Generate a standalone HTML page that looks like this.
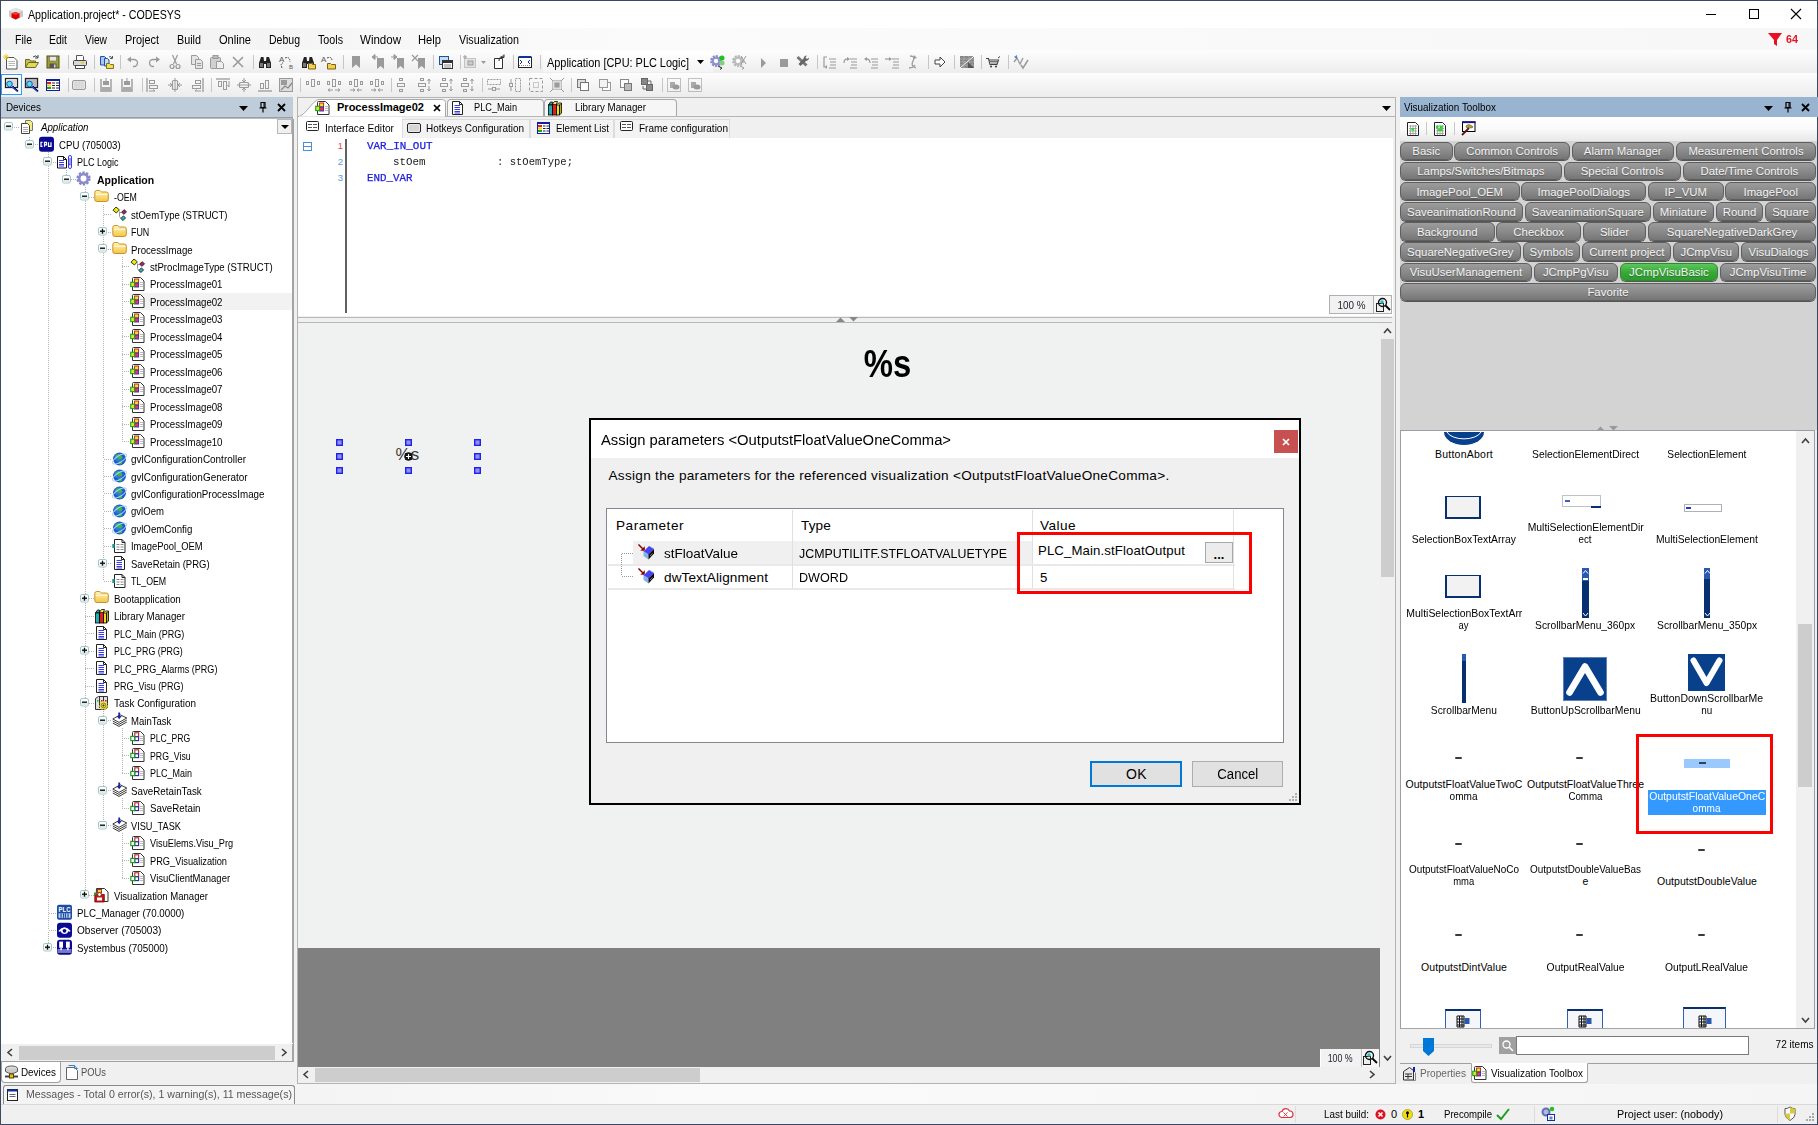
<!DOCTYPE html>
<html><head><meta charset="utf-8"><title>Application.project* - CODESYS</title>
<style>html,body{margin:0;padding:0}body{width:1818px;height:1125px;overflow:hidden;position:relative;background:#f0f0f0;font-family:"Liberation Sans",sans-serif;font-size:11px;color:#000}
body>div,body>span,body>svg{position:absolute;display:block}body>span{white-space:pre}svg{overflow:visible}</style></head>
<body>
<svg width="0" height="0" style="position:absolute"><defs><linearGradient id="fg" x1="0" y1="0" x2="0" y2="1"><stop offset="0" stop-color="#fff6b8"/><stop offset="1" stop-color="#f3c544"/></linearGradient></defs></svg>
<div style="left:0px;top:0px;width:1818px;height:1125px;background:#f0f0f0"></div>
<div style="left:1px;top:1px;width:1816px;height:27px;background:#fff"></div>
<svg style="left:8px;top:7px" width="16" height="14"><path d="M8 1l7 2.500v6l-7 3.500-7-3.500v-6z" fill="#c8c8c8"/><path d="M8 1l7 2.500-7 3-7-3z" fill="#e4e4e4"/><path d="M7.500 5l4 1.500v4l-4 2-4-2v-4z" fill="#e00000"/><path d="M7.500 5l4 1.500-4 1.700-4-1.700z" fill="#ff3030"/></svg>
<span style="left:28.00px;top:6.50px;font-size:12px;line-height:16px;transform:scaleX(0.8891);transform-origin:0 50%;">Application.project* - CODESYS</span>
<div style="left:1706px;top:14px;width:10px;height:1px;background:#000"></div>
<div style="left:1749px;top:9px;width:10px;height:10px;border:1px solid #000;box-sizing:border-box"></div>
<svg style="left:1790px;top:8px" width="12" height="12"><path d="M1 1l10 10M11 1l-10 10" stroke="#000" stroke-width="1.100"/></svg>
<div style="left:1px;top:28px;width:1816px;height:22px;background:linear-gradient(90deg,#f0f0f0,#fbfbfb 35%,#f7f7f7)"></div>
<span style="left:15.00px;top:31.50px;font-size:12px;line-height:16px;transform:scaleX(0.8788);transform-origin:0 50%;">File</span>
<span style="left:49.00px;top:31.50px;font-size:12px;line-height:16px;transform:scaleX(0.8701);transform-origin:0 50%;">Edit</span>
<span style="left:85.00px;top:31.50px;font-size:12px;line-height:16px;transform:scaleX(0.8528);transform-origin:0 50%;">View</span>
<span style="left:125.00px;top:31.50px;font-size:12px;line-height:16px;transform:scaleX(0.9101);transform-origin:0 50%;">Project</span>
<span style="left:177.00px;top:31.50px;font-size:12px;line-height:16px;transform:scaleX(0.8993);transform-origin:0 50%;">Build</span>
<span style="left:219.00px;top:31.50px;font-size:12px;line-height:16px;transform:scaleX(0.9225);transform-origin:0 50%;">Online</span>
<span style="left:269.00px;top:31.50px;font-size:12px;line-height:16px;transform:scaleX(0.8763);transform-origin:0 50%;">Debug</span>
<span style="left:318.00px;top:31.50px;font-size:12px;line-height:16px;transform:scaleX(0.8924);transform-origin:0 50%;">Tools</span>
<span style="left:360.00px;top:31.50px;font-size:12px;line-height:16px;transform:scaleX(0.9605);transform-origin:0 50%;">Window</span>
<span style="left:418.00px;top:31.50px;font-size:12px;line-height:16px;transform:scaleX(0.9316);transform-origin:0 50%;">Help</span>
<span style="left:459.00px;top:31.50px;font-size:12px;line-height:16px;transform:scaleX(0.8934);transform-origin:0 50%;">Visualization</span>
<svg style="left:1768px;top:32px" width="14" height="15"><path d="M0 1h14l-5 7v6l-3-2v-4z" fill="#e81123"/></svg>
<span style="left:1786.00px;top:32.00px;font-size:11px;line-height:15px;transform:scaleX(0.9796);transform-origin:0 50%;font-weight:bold;color:#e81123;">64</span>
<div style="left:1px;top:50px;width:1816px;height:23px;background:linear-gradient(#fdfdfd,#ededed)"></div>
<div style="left:1px;top:73px;width:1816px;height:24px;background:linear-gradient(#fdfdfd,#ececec)"></div>
<div style="left:543px;top:51px;width:170px;height:21px;background:linear-gradient(#fff,#f4f4f4)"></div>
<span style="left:547.00px;top:54.60px;font-size:12px;line-height:16px;transform:scaleX(0.9098);transform-origin:0 50%;">Application [CPU: PLC Logic]</span>
<svg style="left:697px;top:60px" width="7" height="4"><path d="M0 0h7l-3.500 4z" fill="#000"/></svg>
<svg style="left:3px;top:54px" width="16" height="16" viewBox="0 0 16 16"><path d="M3.500 3.500h7.500l3 3v8.500h-10.500z" fill="#fff" stroke="#555"/><path d="M5.500 7.500h6.500M5.500 9.500h6.500M5.500 11.500h6.500" stroke="#b8b8b8"/><path d="M3 0v6M0 3h6M1 1l4 4M5 1l-4 4" stroke="#e8d020" stroke-width=".9"/></svg>
<svg style="left:24px;top:54px" width="16" height="16" viewBox="0 0 16 16"><path d="M1.500 13.500v-8h4l1 1.500h5v2" fill="#c8c050" stroke="#6a6a20"/><path d="M1.500 13.500l3-5h10l-3 5z" fill="#e0d860" stroke="#6a6a20"/><path d="M9 3q3-2.500 5 .5M14 1v3h-3" fill="none" stroke="#444"/></svg>
<svg style="left:45px;top:54px" width="16" height="16" viewBox="0 0 16 16"><rect x="2" y="2" width="12" height="12" fill="#a0a030" stroke="#505010"/><rect x="4.500" y="2.500" width="7" height="4.500" fill="#e8e8e8" stroke="#666" stroke-width=".6"/><rect x="4.500" y="9.500" width="7" height="4.500" fill="#555"/><rect x="9" y="10.500" width="1.500" height="3" fill="#ddd"/></svg>
<div style="left:68px;top:55px;width:1px;height:14px;background:#c6c6c6"></div>
<svg style="left:72px;top:54px" width="16" height="16" viewBox="0 0 16 16"><path d="M4.500 6v-4.500h6l1 1v3.500" fill="#fff" stroke="#555"/><rect x="1.500" y="6.500" width="13" height="5" rx="1" fill="#d8d8d8" stroke="#444"/><path d="M3.500 11.500h9v3h-9z" fill="#fff" stroke="#444"/><rect x="9" y="8" width="3" height="1.500" fill="#e0d020"/></svg>
<div style="left:94px;top:55px;width:1px;height:14px;background:#c6c6c6"></div>
<svg style="left:99px;top:54px" width="16" height="16" viewBox="0 0 16 16"><path d="M1.500 2.500h4l1.500 1.500v7h-5.500z" fill="#a8c8f0" stroke="#2050a0"/><path d="M5.500 4.500h3l1.500 1.500v6h-4.500z" fill="#c8dcf8" stroke="#2050a0"/><path d="M7.500 9.500h3l1 1h3v4h-7z" fill="#f0e050" stroke="#807020"/><path d="M10 3q2-1.500 3 1M13.500 2v2.500h-2.500" fill="none" stroke="#555"/></svg>
<div style="left:120px;top:55px;width:1px;height:14px;background:#c6c6c6"></div>
<svg style="left:125px;top:54px" width="16" height="16" viewBox="0 0 16 16"><path d="M3 5.500h6a3.500 3.500 0 0 1 0 7h-1" fill="none" stroke="#9a9a9a" stroke-width="1.300"/><path d="M2 5.500l4-3v6z" fill="#9a9a9a"/></svg>
<svg style="left:146px;top:54px" width="16" height="16" viewBox="0 0 16 16"><path d="M13 5.500h-6a3.500 3.500 0 0 0 0 7h1" fill="none" stroke="#9a9a9a" stroke-width="1.300"/><path d="M14 5.500l-4-3v6z" fill="#9a9a9a"/></svg>
<svg style="left:167px;top:54px" width="16" height="16" viewBox="0 0 16 16"><path d="M5.500 1l4 9M10.500 1l-4 9" stroke="#9a9a9a" stroke-width="1.200"/><circle cx="5" cy="12.500" r="2" fill="none" stroke="#9a9a9a" stroke-width="1.200"/><circle cx="11" cy="12.500" r="2" fill="none" stroke="#9a9a9a" stroke-width="1.200"/></svg>
<svg style="left:189px;top:54px" width="16" height="16" viewBox="0 0 16 16"><path d="M2.500 1.500h5l2 2v7h-7z" fill="#e4e4e4" stroke="#9a9a9a"/><path d="M6.500 5.500h5l2 2v7h-7z" fill="#e4e4e4" stroke="#9a9a9a"/><path d="M8 9.500h4M8 11.500h4" stroke="#9a9a9a"/></svg>
<svg style="left:209px;top:54px" width="16" height="16" viewBox="0 0 16 16"><rect x="1.500" y="3.500" width="10" height="11" rx="1" fill="#d0d0d0" stroke="#9a9a9a"/><rect x="4" y="1.500" width="5" height="3" fill="#bbb" stroke="#9a9a9a"/><path d="M7.500 7.500h5l2 2v5h-7z" fill="#eee" stroke="#9a9a9a"/></svg>
<svg style="left:230px;top:54px" width="16" height="16" viewBox="0 0 16 16"><path d="M3 3l10 10M13 3l-10 10" stroke="#9a9a9a" stroke-width="1.600"/></svg>
<div style="left:253px;top:55px;width:1px;height:14px;background:#c6c6c6"></div>
<svg style="left:257px;top:54px" width="16" height="16" viewBox="0 0 16 16"><path d="M2 14v-5l2-6h2.500l.5 4h2l.5-4h2.500l2 6v5h-5v-4h-2v4z" fill="#222"/><rect x="3" y="9" width="3" height="4" fill="#777"/><rect x="10" y="9" width="3" height="4" fill="#777"/></svg>
<svg style="left:279px;top:54px" width="16" height="16" viewBox="0 0 16 16"><text x="0" y="8" font-family="Liberation Sans" font-size="8" fill="#555">A</text><text x="10" y="15" font-family="Liberation Sans" font-size="6" fill="#555">B</text><path d="M6 4q5-2 5 4M3 14q-2-5 1-5" fill="none" stroke="#444" stroke-dasharray="1.500 1"/></svg>
<svg style="left:300px;top:54px" width="16" height="16" viewBox="0 0 16 16"><path d="M2 14v-5l2-6h2.500l.5 4h2l.5-4h2.500l2 6v5h-5v-4h-2v4z" fill="#222"/><rect x="3" y="9" width="3" height="4" fill="#777"/><rect x="10" y="9" width="3" height="4" fill="#777"/><path d="M8.500 9.500h3l1 1h3v4.500h-7z" fill="#f0d050" stroke="#806010"/></svg>
<svg style="left:321px;top:54px" width="16" height="16" viewBox="0 0 16 16"><text x="0" y="8" font-family="Liberation Sans" font-size="8" fill="#555">A</text><path d="M6 4q5-2 5 3" fill="none" stroke="#444" stroke-dasharray="1.500 1"/><path d="M6.500 9.500h3l1 1h4v4.500h-8z" fill="#f0d050" stroke="#806010"/></svg>
<div style="left:343px;top:55px;width:1px;height:14px;background:#c6c6c6"></div>
<svg style="left:348px;top:54px" width="16" height="16" viewBox="0 0 16 16"><path d="M4 2h8v12l-4-3.500-4 3.500z" fill="#9a9a9a"/></svg>
<svg style="left:370px;top:54px" width="16" height="16" viewBox="0 0 16 16"><path d="M7 4h7v11l-3.500-3-3.500 3z" fill="#9a9a9a"/><path d="M8 3h-5M2 3l3-2.500v5z" stroke="#9a9a9a" fill="#9a9a9a"/></svg>
<svg style="left:390px;top:54px" width="16" height="16" viewBox="0 0 16 16"><path d="M7 4h7v11l-3.500-3-3.500 3z" fill="#9a9a9a"/><path d="M1 3h5M7 3l-3-2.500v5z" stroke="#9a9a9a" fill="#9a9a9a"/></svg>
<svg style="left:411px;top:54px" width="16" height="16" viewBox="0 0 16 16"><path d="M7 4h7v11l-3.500-3-3.500 3z" fill="#9a9a9a"/><path d="M1 1l6 6M7 1l-6 6" stroke="#9a9a9a" stroke-width="1.300"/></svg>
<div style="left:433px;top:55px;width:1px;height:14px;background:#c6c6c6"></div>
<svg style="left:438px;top:54px" width="16" height="16" viewBox="0 0 16 16"><rect x="1.500" y="2.500" width="9" height="8" fill="#c8dcf8" stroke="#2050a0"/><rect x="4.500" y="6.500" width="10" height="8" fill="#fff" stroke="#333"/><path d="M4.500 8h10" stroke="#333" stroke-width="2"/><path d="M6 11h7M6 13h7" stroke="#888"/></svg>
<div style="left:460px;top:55px;width:1px;height:14px;background:#c6c6c6"></div>
<svg style="left:463px;top:54px" width="16" height="16" viewBox="0 0 16 16"><rect x="1.500" y="4.500" width="11" height="9" fill="#e4e4e4" stroke="#9a9a9a" stroke-dasharray="1 1"/><rect x="5" y="7" width="5" height="4" fill="#ccc" stroke="#9a9a9a"/><path d="M2 1v4M0 3h4" stroke="#9a9a9a"/></svg>
<svg style="left:481px;top:61px" width="5" height="3"><path d="M0 0h5l-2.500 3z" fill="#9a9a9a"/></svg>
<svg style="left:491px;top:54px" width="16" height="16" viewBox="0 0 16 16"><path d="M3.500 4.500h8v10h-8z" fill="#fff" stroke="#333"/><path d="M8 7q0-5 5-5M13 .5v3h-3" fill="none" stroke="#333"/></svg>
<div style="left:513px;top:55px;width:1px;height:14px;background:#c6c6c6"></div>
<svg style="left:517px;top:54px" width="16" height="16" viewBox="0 0 16 16"><rect x="1.500" y="3.500" width="13" height="10" fill="#fff" stroke="#222"/><path d="M1.500 3h13" stroke="#1030a0" stroke-width="2"/><path d="M3 6l2 2-2 2M13 6l-2 2 2 2" fill="none" stroke="#1030a0"/><path d="M2 11.500h12" stroke="#888" stroke-dasharray="1 1"/></svg>
<div style="left:540px;top:55px;width:1px;height:14px;background:#c6c6c6"></div>
<svg style="left:710px;top:54px" width="16" height="16" viewBox="0 0 16 16"><circle cx="6" cy="7" r="4.600" fill="none" stroke="#8a8acc" stroke-width="2.600" stroke-dasharray="1.900 1.100"/><circle cx="6" cy="7" r="3.400" fill="none" stroke="#9090d0" stroke-width="2.400"/><circle cx="6" cy="7" r="1.800" fill="#fff"/><circle cx="12" cy="4" r="2.500" fill="#20c020"/><circle cx="12" cy="9" r="2.500" fill="#80d080"/><path d="M8 12l4 2-2 1.500" fill="none" stroke="#222"/></svg>
<svg style="left:732px;top:54px" width="16" height="16" viewBox="0 0 16 16"><circle cx="6" cy="7" r="4.600" fill="none" stroke="#b4b4b4" stroke-width="2.600" stroke-dasharray="1.900 1.100"/><circle cx="6" cy="7" r="3.400" fill="none" stroke="#bcbcbc" stroke-width="2.400"/><circle cx="6" cy="7" r="1.800" fill="#fff"/><path d="M9 2l5 8M14 2l-5 8" stroke="#9a9a9a"/><path d="M8 12l4 2-2 1.500" fill="none" stroke="#9a9a9a"/></svg>
<svg style="left:755px;top:55px" width="16" height="16" viewBox="0 0 16 16"><path d="M6 3l5 5-5 5z" fill="#9a9a9a"/></svg>
<svg style="left:776px;top:55px" width="16" height="16" viewBox="0 0 16 16"><rect x="4" y="4" width="8" height="8" fill="#9a9a9a"/></svg>
<svg style="left:795px;top:54px" width="16" height="16" viewBox="0 0 16 16"><path d="M1.500 4l2-2 9 8.500-2 2z" fill="#777"/><path d="M12 1.500q-3 0-3.500 3l-5 5.500 2 2 5.500-5q3-.5 3-3.500l-2 1.500-1.500-1.500z" fill="#666"/></svg>
<div style="left:817px;top:55px;width:1px;height:14px;background:#c6c6c6"></div>
<svg style="left:821px;top:54px" width="16" height="16" viewBox="0 0 16 16"><path d="M8 5h7M9 8h6M9 11h6M8 14h7" stroke="#9a9a9a" stroke-width="1.200"/><path d="M6 3h-3v10h3" fill="none" stroke="#9a9a9a" stroke-width="1.200"/><path d="M4 13l2-2v4z" fill="#9a9a9a"/></svg>
<svg style="left:842px;top:54px" width="16" height="16" viewBox="0 0 16 16"><path d="M8 5h7M9 8h6M9 11h6M8 14h7" stroke="#9a9a9a" stroke-width="1.200"/><path d="M2 9q0-5 5-4" fill="none" stroke="#9a9a9a" stroke-width="1.200"/><path d="M5 3l3 2-3 2z" fill="#9a9a9a"/></svg>
<svg style="left:863px;top:54px" width="16" height="16" viewBox="0 0 16 16"><path d="M8 5h7M9 8h6M9 11h6M8 14h7" stroke="#9a9a9a" stroke-width="1.200"/><path d="M7 9q0-5-5-4" fill="none" stroke="#9a9a9a" stroke-width="1.200"/><path d="M4 3l-3 2 3 2z" fill="#9a9a9a"/></svg>
<svg style="left:884px;top:54px" width="16" height="16" viewBox="0 0 16 16"><path d="M8 5h7M9 8h6M9 11h6M8 14h7" stroke="#9a9a9a" stroke-width="1.200"/><path d="M1 5h5" stroke="#9a9a9a" stroke-width="1.200"/><path d="M5 3l3 2-3 2z" fill="#9a9a9a"/></svg>
<svg style="left:905px;top:54px" width="16" height="16" viewBox="0 0 16 16"><path d="M5 2q6 0 3 5t3 7M4 14q4 0 6-3" fill="none" stroke="#9a9a9a" stroke-width="1.300"/><path d="M9 1l3 3-4 1z" fill="#9a9a9a"/></svg>
<div style="left:928px;top:55px;width:1px;height:14px;background:#c6c6c6"></div>
<svg style="left:932px;top:54px" width="16" height="16" viewBox="0 0 16 16"><path d="M3 6h5v-3l5 5-5 5v-3h-5z" fill="#fff" stroke="#444"/></svg>
<div style="left:954px;top:55px;width:1px;height:14px;background:#c6c6c6"></div>
<svg style="left:959px;top:54px" width="16" height="16" viewBox="0 0 16 16"><rect x="1" y="2" width="14" height="12" fill="#888"/><path d="M1 14l14-12" stroke="#fff"/><path d="M1 5h14M1 8h14M1 11h14M5 2v12M10 2v12" stroke="#bbb" stroke-width=".6"/><path d="M9 8l6 6h-6z" fill="#555"/></svg>
<div style="left:981px;top:55px;width:1px;height:14px;background:#c6c6c6"></div>
<svg style="left:985px;top:54px" width="16" height="16" viewBox="0 0 16 16"><path d="M1 4.500h2.500l1.500 6h7l1.500-4.500h-9.500" fill="none" stroke="#444" stroke-width="1.100"/><path d="M5 7.500h8M5.500 9h7" stroke="#666" stroke-width=".9"/><circle cx="6" cy="12.500" r="1.100" fill="#444"/><circle cx="11" cy="12.500" r="1.100" fill="#444"/><path d="M13 4l2-1.500" stroke="#444"/></svg>
<div style="left:1008px;top:55px;width:1px;height:14px;background:#c6c6c6"></div>
<svg style="left:1013px;top:54px" width="16" height="16" viewBox="0 0 16 16"><path d="M1 8l3-4 3 6 3-6" fill="none" stroke="#9a9a9a" stroke-width="1.300"/><path d="M8 11l2 3 5-8" fill="none" stroke="#9a9a9a" stroke-width="1.500"/><path d="M1 3l3-2v4z" fill="#5080d0"/></svg>
<div style="left:1px;top:74px;width:21px;height:21px;border:1px solid #3399ff;background:#fff;box-sizing:border-box"></div>
<svg style="left:4px;top:77px" width="16" height="16" viewBox="0 0 16 16"><rect x="1.500" y="1.500" width="12" height="9" fill="#fff" stroke="#222" stroke-width="1.300"/><path d="M3 4h9M3 6h9M3 8h9" stroke="#999" stroke-width=".7"/><circle cx="5.500" cy="7" r="2.800" fill="#60d8f0" stroke="#1060c0"/><path d="M8 9.500l6 5" stroke="#2040c0" stroke-width="2"/><path d="M9 9l5 5" stroke="#000" stroke-width=".8"/></svg>
<svg style="left:24px;top:77px" width="16" height="16" viewBox="0 0 16 16"><rect x="1.500" y="1.500" width="12" height="9" fill="#ccc" stroke="#222" stroke-width="1.300"/><path d="M3 4h9M3 6h9M3 8h9" stroke="#999" stroke-width=".7"/><circle cx="5.500" cy="7" r="2.800" fill="#60d8f0" stroke="#1060c0"/><path d="M8 9.500l6 5" stroke="#2040c0" stroke-width="2"/><path d="M9 9l5 5" stroke="#000" stroke-width=".8"/></svg>
<svg style="left:45px;top:77px" width="16" height="16" viewBox="0 0 16 16"><rect x="1.500" y="2.500" width="13" height="11" fill="#fff" stroke="#1020a0"/><path d="M1.500 3h13" stroke="#1020a0" stroke-width="2"/><rect x="2" y="5" width="4" height="2" fill="#e02020"/><rect x="2" y="7.500" width="4" height="2" fill="#e0d020"/><rect x="2" y="10" width="4" height="2" fill="#20a020"/><path d="M7 6h3M11 6h3M7 8.500h3M11 8.500h3M7 11h3M11 11h3" stroke="#222"/></svg>
<div style="left:68px;top:78px;width:1px;height:14px;background:#c6c6c6"></div>
<svg style="left:71px;top:77px" width="16" height="16" viewBox="0 0 16 16"><rect x="1.500" y="3.500" width="13" height="9" rx="1.500" fill="#e4e4e4" stroke="#9a9a9a"/><path d="M3 6h10M3 8h10M3 10h10M5 4v8M8 4v8M11 4v8" stroke="#d0d0d0" stroke-width=".7"/></svg>
<div style="left:94px;top:78px;width:1px;height:14px;background:#c6c6c6"></div>
<svg style="left:98px;top:77px" width="16" height="16" viewBox="0 0 16 16"><path d="M3 2v12h10v-12" fill="none" stroke="#9a9a9a" stroke-width="1.400"/><rect x="5" y="4" width="6" height="4" fill="#9a9a9a"/><rect x="4" y="10" width="8" height="4" fill="#aaa"/><path d="M8 1v4" stroke="#9a9a9a"/></svg>
<svg style="left:119px;top:77px" width="16" height="16" viewBox="0 0 16 16"><path d="M3 2v12h10v-12" fill="none" stroke="#9a9a9a" stroke-width="1.400"/><rect x="5" y="4" width="6" height="4" fill="#9a9a9a"/><rect x="4" y="10" width="8" height="4" fill="#aaa"/><path d="M8 1v4" stroke="#9a9a9a"/></svg>
<div style="left:142px;top:78px;width:1px;height:14px;background:#c6c6c6"></div>
<svg style="left:145px;top:77px" width="16" height="16" viewBox="0 0 16 16"><path d="M2 1v14" stroke="#9a9a9a" stroke-width="1.300"/><rect x="4.500" y="3.500" width="5" height="3" fill="none" stroke="#9a9a9a"/><rect x="4.500" y="8.500" width="8" height="3" fill="none" stroke="#9a9a9a"/><path d="M4 14h6l-2-1.500" fill="none" stroke="#9a9a9a"/></svg>
<svg style="left:167px;top:77px" width="16" height="16" viewBox="0 0 16 16"><rect x="5.500" y="3.500" width="5" height="9" rx="1" fill="none" stroke="#9a9a9a" stroke-width="1.200"/><path d="M1 8h4M11 8h4M8 1v14" stroke="#9a9a9a"/><path d="M3 6l2 2-2 2M13 6l-2 2 2 2" fill="none" stroke="#9a9a9a"/></svg>
<svg style="left:189px;top:77px" width="16" height="16" viewBox="0 0 16 16"><path d="M14 1v14" stroke="#9a9a9a" stroke-width="1.300"/><rect x="6.500" y="3.500" width="5" height="3" fill="none" stroke="#9a9a9a"/><rect x="3.500" y="8.500" width="8" height="3" fill="none" stroke="#9a9a9a"/><path d="M12 14h-6l2-1.500" fill="none" stroke="#9a9a9a"/></svg>
<div style="left:211px;top:78px;width:1px;height:14px;background:#c6c6c6"></div>
<svg style="left:215px;top:77px" width="16" height="16" viewBox="0 0 16 16"><path d="M1 2h14" stroke="#9a9a9a" stroke-width="1.300"/><rect x="3.500" y="4.500" width="3" height="5" fill="none" stroke="#9a9a9a"/><rect x="8.500" y="4.500" width="3" height="8" fill="none" stroke="#9a9a9a"/><path d="M14 4v6l-1.500-2" fill="none" stroke="#9a9a9a"/></svg>
<svg style="left:236px;top:77px" width="16" height="16" viewBox="0 0 16 16"><rect x="3.500" y="5.500" width="9" height="5" rx="1" fill="none" stroke="#9a9a9a" stroke-width="1.200"/><path d="M8 1v4M8 11v4M1 8h14" stroke="#9a9a9a"/><path d="M6 3l2 2 2-2M6 13l2-2 2 2" fill="none" stroke="#9a9a9a"/></svg>
<svg style="left:257px;top:77px" width="16" height="16" viewBox="0 0 16 16"><path d="M1 14h14" stroke="#9a9a9a" stroke-width="1.300"/><rect x="3.500" y="6.500" width="3" height="5" fill="none" stroke="#9a9a9a"/><rect x="8.500" y="3.500" width="3" height="8" fill="none" stroke="#9a9a9a"/></svg>
<svg style="left:278px;top:77px" width="16" height="16" viewBox="0 0 16 16"><rect x="1.500" y="1.500" width="13" height="13" fill="#ddd" stroke="#9a9a9a"/><rect x="3" y="3" width="6" height="5" fill="#9a9a9a"/><path d="M3 13l4-4 3 2 4-5" fill="none" stroke="#888" stroke-width="1.300"/></svg>
<div style="left:300px;top:78px;width:1px;height:14px;background:#c6c6c6"></div>
<svg style="left:305px;top:77px" width="16" height="16" viewBox="0 0 16 16"><rect x="1.500" y="4.500" width="2" height="3" fill="none" stroke="#9a9a9a"/><rect x="6.500" y="2.500" width="3" height="7" fill="none" stroke="#9a9a9a"/><rect x="12.500" y="4.500" width="2" height="3" fill="none" stroke="#9a9a9a"/></svg>
<svg style="left:326px;top:77px" width="16" height="16" viewBox="0 0 16 16"><rect x="1.500" y="4.500" width="2" height="3" fill="none" stroke="#9a9a9a"/><rect x="6.500" y="2.500" width="3" height="7" fill="none" stroke="#9a9a9a"/><rect x="12.500" y="4.500" width="2" height="3" fill="none" stroke="#9a9a9a"/><path d="M2 13h5M9 13h5" stroke="#9a9a9a"/><path d="M4 11.500l-2 1.500 2 1.500M12 11.500l2 1.500-2 1.500" fill="none" stroke="#9a9a9a"/></svg>
<svg style="left:348px;top:77px" width="16" height="16" viewBox="0 0 16 16"><rect x="1.500" y="4.500" width="2" height="3" fill="none" stroke="#9a9a9a"/><rect x="6.500" y="2.500" width="3" height="7" fill="none" stroke="#9a9a9a"/><rect x="12.500" y="4.500" width="2" height="3" fill="none" stroke="#9a9a9a"/><path d="M2 13h5M9 13h5" stroke="#9a9a9a"/><path d="M5 11.500l2 1.500-2 1.500M11 11.500l-2 1.500 2 1.500" fill="none" stroke="#9a9a9a"/></svg>
<svg style="left:369px;top:77px" width="16" height="16" viewBox="0 0 16 16"><rect x="1.500" y="4.500" width="2" height="3" fill="none" stroke="#9a9a9a"/><rect x="6.500" y="2.500" width="3" height="7" fill="none" stroke="#9a9a9a"/><rect x="12.500" y="4.500" width="2" height="3" fill="none" stroke="#9a9a9a"/><path d="M2 13h5M9 13h5" stroke="#9a9a9a"/><path d="M5 11.500l2 1.500-2 1.500M11 11.500l-2 1.500 2 1.500" fill="none" stroke="#9a9a9a"/></svg>
<div style="left:391px;top:78px;width:1px;height:14px;background:#c6c6c6"></div>
<svg style="left:395px;top:77px" width="16" height="16" viewBox="0 0 16 16"><rect x="4.500" y="1.500" width="3" height="2" fill="none" stroke="#9a9a9a"/><rect x="2.500" y="6.500" width="7" height="3" fill="none" stroke="#9a9a9a"/><rect x="4.500" y="12.500" width="3" height="2" fill="none" stroke="#9a9a9a"/></svg>
<svg style="left:416px;top:77px" width="16" height="16" viewBox="0 0 16 16"><rect x="4.500" y="1.500" width="3" height="2" fill="none" stroke="#9a9a9a"/><rect x="2.500" y="6.500" width="7" height="3" fill="none" stroke="#9a9a9a"/><rect x="4.500" y="12.500" width="3" height="2" fill="none" stroke="#9a9a9a"/><path d="M13 2v5M13 9v5" stroke="#9a9a9a"/><path d="M11.500 4l1.500-2 1.500 2M11.500 12l1.500 2 1.500-2" fill="none" stroke="#9a9a9a"/></svg>
<svg style="left:438px;top:77px" width="16" height="16" viewBox="0 0 16 16"><rect x="4.500" y="1.500" width="3" height="2" fill="none" stroke="#9a9a9a"/><rect x="2.500" y="6.500" width="7" height="3" fill="none" stroke="#9a9a9a"/><rect x="4.500" y="12.500" width="3" height="2" fill="none" stroke="#9a9a9a"/><path d="M13 2v5M13 9v5" stroke="#9a9a9a"/><path d="M11.500 4l1.500-2 1.500 2M11.500 12l1.500 2 1.500-2" fill="none" stroke="#9a9a9a"/></svg>
<svg style="left:459px;top:77px" width="16" height="16" viewBox="0 0 16 16"><rect x="4.500" y="1.500" width="3" height="2" fill="none" stroke="#9a9a9a"/><rect x="2.500" y="6.500" width="7" height="3" fill="none" stroke="#9a9a9a"/><rect x="4.500" y="12.500" width="3" height="2" fill="none" stroke="#9a9a9a"/><path d="M13 2v5M13 9v5" stroke="#9a9a9a"/><path d="M11.500 4l1.500-2 1.500 2M11.500 12l1.500 2 1.500-2" fill="none" stroke="#9a9a9a"/></svg>
<div style="left:482px;top:78px;width:1px;height:14px;background:#c6c6c6"></div>
<svg style="left:486px;top:77px" width="16" height="16" viewBox="0 0 16 16"><rect x="1.500" y="2.500" width="13" height="5" fill="none" stroke="#9a9a9a" stroke-dasharray="2 1"/><path d="M2 12h4M10 12h4" stroke="#9a9a9a"/><rect x="6.500" y="10.500" width="3" height="3" fill="none" stroke="#9a9a9a"/></svg>
<svg style="left:507px;top:77px" width="16" height="16" viewBox="0 0 16 16"><rect x="8.500" y="1.500" width="5" height="13" fill="none" stroke="#9a9a9a" stroke-dasharray="2 1"/><path d="M4 2v4M4 10v4" stroke="#9a9a9a"/><rect x="2.500" y="6.500" width="3" height="3" fill="none" stroke="#9a9a9a"/></svg>
<svg style="left:528px;top:77px" width="16" height="16" viewBox="0 0 16 16"><rect x="1.500" y="1.500" width="13" height="13" fill="none" stroke="#9a9a9a" stroke-dasharray="3 2"/><rect x="5.500" y="5.500" width="5" height="5" fill="none" stroke="#9a9a9a" stroke-dasharray="1 1"/></svg>
<svg style="left:549px;top:77px" width="16" height="16" viewBox="0 0 16 16"><rect x="3.500" y="3.500" width="9" height="9" fill="#ddd" stroke="#9a9a9a" stroke-dasharray="1 1"/><rect x="5.500" y="5.500" width="5" height="5" fill="#9a9a9a"/><path d="M1 1l3 3M15 1l-3 3M1 15l3-3M15 15l-3-3" stroke="#9a9a9a"/></svg>
<div style="left:571px;top:78px;width:1px;height:14px;background:#c6c6c6"></div>
<svg style="left:575px;top:77px" width="16" height="16" viewBox="0 0 16 16"><rect x="2.500" y="2.500" width="8" height="8" fill="#ddd" stroke="#777"/><rect x="5.500" y="5.500" width="8" height="8" fill="#fff" stroke="#777"/></svg>
<svg style="left:597px;top:77px" width="16" height="16" viewBox="0 0 16 16"><rect x="5.500" y="5.500" width="8" height="8" fill="#fff" stroke="#999"/><rect x="2.500" y="2.500" width="8" height="8" fill="#f4f4f4" stroke="#999"/></svg>
<svg style="left:618px;top:77px" width="16" height="16" viewBox="0 0 16 16"><rect x="2.500" y="2.500" width="8" height="8" fill="#fff" stroke="#888"/><rect x="6.500" y="6.500" width="7" height="7" fill="#bbb" stroke="#777"/></svg>
<svg style="left:639px;top:77px" width="16" height="16" viewBox="0 0 16 16"><rect x="2.500" y="1.500" width="6" height="6" fill="#888" stroke="#666"/><rect x="7.500" y="7.500" width="6" height="6" fill="#888" stroke="#666"/><path d="M9 4h3v3M7 12h-3v-3" fill="none" stroke="#666"/></svg>
<div style="left:662px;top:78px;width:1px;height:14px;background:#c6c6c6"></div>
<svg style="left:666px;top:77px" width="16" height="16" viewBox="0 0 16 16"><rect x="1.500" y="1.500" width="13" height="13" fill="none" stroke="#888" stroke-dasharray="1 1"/><rect x="4" y="5" width="5" height="6" fill="#aaa"/><ellipse cx="10" cy="10" rx="3.500" ry="2.500" fill="#999"/></svg>
<svg style="left:687px;top:77px" width="16" height="16" viewBox="0 0 16 16"><rect x="1.500" y="1.500" width="13" height="13" fill="none" stroke="#888" stroke-dasharray="1 1"/><rect x="4" y="5" width="5" height="6" fill="#aaa"/><ellipse cx="10" cy="10" rx="3.500" ry="2.500" fill="#999"/></svg>
<div style="left:1px;top:1084px;width:1816px;height:20px;background:linear-gradient(90deg,#f0f0f0,#fafafa 40%,#f5f5f5)"></div>
<div style="left:1px;top:1104px;width:1816px;height:1px;background:#d8d8d8"></div>
<div style="left:1273px;top:1106px;width:1px;height:17px;background:#dcdcdc"></div>
<div style="left:1px;top:1105px;width:1816px;height:19px;background:#f0f0f0"></div>
<svg style="left:1278px;top:1107px" width="16" height="12"><path d="M4 10.500a3 3 0 0 1 0-6 4 4 0 0 1 7.500-.5 3 3 0 0 1 .5 6.500z" fill="#fff" stroke="#e03040" stroke-width="1.200"/><path d="M5.500 5.500l4 4M9.500 5.500l-4 4" stroke="#e03040" stroke-width=".9"/></svg>
<div style="left:1295px;top:1106px;width:1px;height:17px;background:#dcdcdc"></div>
<span style="left:1324.00px;top:1106.50px;font-size:11px;line-height:15px;transform:scaleX(0.8972);transform-origin:0 50%;">Last build:</span>
<svg style="left:1375px;top:1109px" width="11" height="11"><circle cx="5.500" cy="5.500" r="5" fill="#e01020"/><path d="M3.500 3.500l4 4M7.500 3.500l-4 4" stroke="#fff" stroke-width="1.600"/></svg>
<span style="left:1391.00px;top:1106.50px;font-size:11px;line-height:15px;">0</span>
<svg style="left:1402px;top:1109px" width="11" height="11"><circle cx="5.500" cy="5.500" r="5" fill="#f0e010" stroke="#a09000" stroke-width=".7"/><circle cx="5.500" cy="3.800" r="1.500" fill="#000"/><path d="M5.500 4v4.500" stroke="#000" stroke-width="1.200"/></svg>
<span style="left:1418.00px;top:1106.50px;font-size:11px;line-height:15px;font-weight:bold;">1</span>
<span style="left:1444.00px;top:1106.50px;font-size:11px;line-height:15px;transform:scaleX(0.8722);transform-origin:0 50%;">Precompile</span>
<svg style="left:1496px;top:1108px" width="14" height="12"><path d="M1 7l4 4 8-10" fill="none" stroke="#18a018" stroke-width="2"/></svg>
<div style="left:1534px;top:1106px;width:1px;height:17px;background:#dcdcdc"></div>
<svg style="left:1540px;top:1106px" width="16" height="16"><circle cx="6" cy="6" r="3.500" fill="#b0b8e0" stroke="#6070b0" stroke-width="2"/><circle cx="12" cy="3" r="2.200" fill="#20c020"/><rect x="7.500" y="8.500" width="7" height="6" fill="#fff" stroke="#1030a0"/><rect x="9.500" y="10.500" width="3" height="3" fill="#6080d0"/></svg>
<span style="left:1617.00px;top:1106.50px;font-size:11px;line-height:15px;transform:scaleX(0.9795);transform-origin:0 50%;">Project user: (nobody)</span>
<div style="left:1777px;top:1106px;width:1px;height:17px;background:#dcdcdc"></div>
<svg style="left:1784px;top:1106px" width="12" height="15"><path d="M6 1q3 2 5 1.500v6q0 3-5 6-5-3-5-6v-6q2 .5 5-1.500z" fill="#fff" stroke="#555"/><path d="M6 1q3 2 5 1.500v5h-5z" fill="#d8c840"/><path d="M6 7.500h-5q0 4 5 7z" fill="#d8c840"/></svg>
<svg style="left:1805px;top:1112px" width="10" height="10"><path d="M8 1v2M5 4v2M8 4v2M2 7v2M5 7v2M8 7v2" stroke="#aaa" stroke-width="2"/></svg>
<div style="left:0px;top:0px;width:1818px;height:1px;background:#3d4963"></div>
<div style="left:0px;top:0px;width:1px;height:1125px;background:#3d4963"></div>
<div style="left:1817px;top:0px;width:1px;height:1125px;background:#3d4963"></div>
<div style="left:0px;top:1124px;width:1818px;height:1px;background:#3d4963"></div>
<div style="left:1px;top:97px;width:292px;height:20px;background:#bfcddb"></div>
<span style="left:6.00px;top:100.30px;font-size:11px;line-height:15px;transform:scaleX(0.8946);transform-origin:0 50%;">Devices</span>
<svg style="left:239px;top:106px" width="9" height="5"><path d="M0 0h9l-4.500 5z" fill="#000"/></svg>
<svg style="left:259px;top:102px" width="8" height="11"><path d="M2 .5h4v5h-4zM.5 6h7M4 6v4.500" fill="none" stroke="#000" stroke-width="1.200"/><path d="M5 1v4.500" stroke="#000"/></svg>
<svg style="left:277px;top:103px" width="9" height="9"><path d="M1 1l7 7M8 1l-7 7" stroke="#000" stroke-width="1.800"/></svg>
<div style="left:1px;top:117px;width:292px;height:2px;background:linear-gradient(#8a8f96,#c8ccd0)"></div>
<div style="left:1px;top:119px;width:291px;height:924px;background:#fff"></div>
<div style="left:292px;top:119px;width:2px;height:942px;background:#a4a4a4"></div>
<div style="left:277px;top:119px;width:15px;height:15px;background:#f0f0f0;border:1px solid #b8b8b8;box-sizing:border-box"></div>
<svg style="left:281px;top:125px" width="8" height="4"><path d="M0 0h8l-4 4z" fill="#000"/></svg>
<div style="left:29px;top:135.8px;width:1px;height:5.4599999999999795px;background:repeating-linear-gradient(#fff 0 1px,#b4b4b4 1px 2px)"></div>
<div style="left:48px;top:151.26px;width:1px;height:797.16px;background:repeating-linear-gradient(#fff 0 1px,#b4b4b4 1px 2px)"></div>
<div style="left:66px;top:168.72px;width:1px;height:11.460000000000008px;background:repeating-linear-gradient(#fff 0 1px,#b4b4b4 1px 2px)"></div>
<div style="left:85px;top:186.18px;width:1px;height:709.8599999999999px;background:repeating-linear-gradient(#fff 0 1px,#b4b4b4 1px 2px)"></div>
<div style="left:103px;top:203.64px;width:1px;height:378.12px;background:repeating-linear-gradient(#fff 0 1px,#b4b4b4 1px 2px)"></div>
<div style="left:122px;top:256.02px;width:1px;height:186.06000000000006px;background:repeating-linear-gradient(#fff 0 1px,#b4b4b4 1px 2px)"></div>
<div style="left:103px;top:709.98px;width:1px;height:116.22000000000003px;background:repeating-linear-gradient(#fff 0 1px,#b4b4b4 1px 2px)"></div>
<div style="left:122px;top:727.4399999999999px;width:1px;height:46.379999999999995px;background:repeating-linear-gradient(#fff 0 1px,#b4b4b4 1px 2px)"></div>
<div style="left:122px;top:797.28px;width:1px;height:11.460000000000036px;background:repeating-linear-gradient(#fff 0 1px,#b4b4b4 1px 2px)"></div>
<div style="left:122px;top:832.2px;width:1px;height:46.379999999999995px;background:repeating-linear-gradient(#fff 0 1px,#b4b4b4 1px 2px)"></div>
<div style="left:11px;top:127px;width:9px;height:1px;background:repeating-linear-gradient(90deg,#fff 0 1px,#b4b4b4 1px 2px)"></div>
<svg style="left:3.5px;top:122.1px" width="9" height="9" viewBox="0 0 9 9"><rect x=".5" y=".5" width="8" height="7.500" rx="1.500" fill="#fff" stroke="#9ccacc"/><rect x="1.300" y="4.500" width="6.400" height="2.800" fill="#e6e6e6"/><path d="M2 4.200H7" stroke="#111" stroke-width="1.400"/></svg>
<svg style="left:20px;top:119px" width="16" height="16" viewBox="0 0 16 16"><path d="M5.500 1.500h5l2 2v8h-7z" fill="#f4ee80" stroke="#777"/><path d="M1.500 4.500h6l2 2v8h-8z" fill="#fff" stroke="#444"/><path d="M3 8.500h5M3 10.500h5M3 12.500h5" stroke="#aaa"/></svg>
<span style="left:40.70px;top:120.30px;font-size:11px;line-height:15px;transform:scaleX(0.8824);transform-origin:0 50%;font-style:italic;">Application</span>
<div style="left:30px;top:144px;width:8px;height:1px;background:repeating-linear-gradient(90deg,#fff 0 1px,#b4b4b4 1px 2px)"></div>
<svg style="left:24.5px;top:139.6px" width="9" height="9" viewBox="0 0 9 9"><rect x=".5" y=".5" width="8" height="7.500" rx="1.500" fill="#fff" stroke="#9ccacc"/><rect x="1.300" y="4.500" width="6.400" height="2.800" fill="#e6e6e6"/><path d="M2 4.200H7" stroke="#111" stroke-width="1.400"/></svg>
<svg style="left:38.5px;top:136px" width="16" height="16" viewBox="0 0 16 16"><g transform="translate(0,.8)"><rect x="0" y="0" width="15" height="15" rx="3" fill="#0a0a92"/><path d="M3.500 5.500h-1.500v4h1.500M5.500 10v-4.500h2v2.500h-2M9.500 5.500v4h2.500v-4" fill="none" stroke="#fff" stroke-width="1.200"/></g></svg>
<span style="left:58.70px;top:137.76px;font-size:11px;line-height:15px;transform:scaleX(0.8759);transform-origin:0 50%;">CPU (705003)</span>
<div style="left:48px;top:162px;width:8px;height:1px;background:repeating-linear-gradient(90deg,#fff 0 1px,#b4b4b4 1px 2px)"></div>
<svg style="left:42.5px;top:157.0px" width="9" height="9" viewBox="0 0 9 9"><rect x=".5" y=".5" width="8" height="7.500" rx="1.500" fill="#fff" stroke="#9ccacc"/><rect x="1.300" y="4.500" width="6.400" height="2.800" fill="#e6e6e6"/><path d="M2 4.200H7" stroke="#111" stroke-width="1.400"/></svg>
<svg style="left:56.5px;top:154px" width="16" height="16" viewBox="0 0 16 16"><path d="M.5 2.500h6l3 3v8.500h-9z" fill="#fff" stroke="#111"/><path d="M6.500 2.500v3h3" fill="none" stroke="#111"/><path d="M2 6.500h5M2 8.500h5M2 10.500h5M2 12h5" stroke="#3a3af0"/><rect x="11.500" y="1.500" width="3" height="13" rx="1.500" fill="#fff" stroke="#3a3af0"/><path d="M13 4v7M11.800 9.500l1.200 2" stroke="#3a3af0"/></svg>
<span style="left:76.70px;top:155.22px;font-size:11px;line-height:15px;transform:scaleX(0.8195);transform-origin:0 50%;">PLC Logic</span>
<div style="left:66px;top:179px;width:10px;height:1px;background:repeating-linear-gradient(90deg,#fff 0 1px,#b4b4b4 1px 2px)"></div>
<svg style="left:61.5px;top:174.5px" width="9" height="9" viewBox="0 0 9 9"><rect x=".5" y=".5" width="8" height="7.500" rx="1.500" fill="#fff" stroke="#9ccacc"/><rect x="1.300" y="4.500" width="6.400" height="2.800" fill="#e6e6e6"/><path d="M2 4.200H7" stroke="#111" stroke-width="1.400"/></svg>
<svg style="left:75.5px;top:171px" width="16" height="16" viewBox="0 0 16 16"><circle cx="7.500" cy="7.500" r="5.600" fill="none" stroke="#8585c8" stroke-width="3" stroke-dasharray="2.200 1.320"/><circle cx="7.500" cy="7.500" r="4.300" fill="none" stroke="#8c8ccc" stroke-width="2.800"/><circle cx="7.500" cy="7.500" r="2.700" fill="#fff"/></svg>
<span style="left:96.70px;top:172.68px;font-size:11px;line-height:15px;transform:scaleX(0.9551);transform-origin:0 50%;font-weight:bold;">Application</span>
<div style="left:84px;top:197px;width:10px;height:1px;background:repeating-linear-gradient(90deg,#fff 0 1px,#b4b4b4 1px 2px)"></div>
<svg style="left:79.5px;top:191.9px" width="9" height="9" viewBox="0 0 9 9"><rect x=".5" y=".5" width="8" height="7.500" rx="1.500" fill="#fff" stroke="#9ccacc"/><rect x="1.300" y="4.500" width="6.400" height="2.800" fill="#e6e6e6"/><path d="M2 4.200H7" stroke="#111" stroke-width="1.400"/></svg>
<svg style="left:93.5px;top:189px" width="16" height="16" viewBox="0 0 16 16"><path d="M.8 3.500q0-2 2-2h2.500q1 0 1.500 1l.5 .5h5q2 0 2 2v5.500q0 2-2 2h-9.500q-2 0-2-2z" fill="url(#fg)" stroke="#c98f30"/><path d="M1.800 5.500h11.500" stroke="#fffbe0" stroke-opacity=".8"/></svg>
<span style="left:113.70px;top:190.14px;font-size:11px;line-height:15px;transform:scaleX(0.7970);transform-origin:0 50%;">-OEM</span>
<div style="left:103px;top:214px;width:9px;height:1px;background:repeating-linear-gradient(90deg,#fff 0 1px,#b4b4b4 1px 2px)"></div>
<svg style="left:112px;top:206px" width="16" height="16" viewBox="0 0 16 16"><path d="M7.500 5.500v5q0 1 1.500 1.500M7.500 6.500h2" fill="none" stroke="#999"/><path d="M1 4.200l3-3.200 3.400 2.800-3 3.200z" fill="#ecec00" stroke="#222" stroke-width=".9"/><path d="M9.600 6.300l2.400-2.600 2.500 2-2.400 2.600z" fill="#c4107c" stroke="#222" stroke-width=".9"/><path d="M8.800 12.600l2.500-2.700 2.300 1.900-2.500 2.700z" fill="#20b8b8" stroke="#222" stroke-width=".9"/></svg>
<span style="left:131.40px;top:207.60px;font-size:11px;line-height:15px;transform:scaleX(0.8675);transform-origin:0 50%;">stOemType (STRUCT)</span>
<div style="left:103px;top:232px;width:9px;height:1px;background:repeating-linear-gradient(90deg,#fff 0 1px,#b4b4b4 1px 2px)"></div>
<svg style="left:98px;top:226.9px" width="9" height="9" viewBox="0 0 9 9"><rect x=".5" y=".5" width="8" height="7.500" rx="1.500" fill="#fff" stroke="#9ccacc"/><rect x="1.300" y="4.500" width="6.400" height="2.800" fill="#e6e6e6"/><path d="M2 4.200H7" stroke="#111" stroke-width="1.400"/><path d="M4.500 1.700V6.700" stroke="#111" stroke-width="1.300"/></svg>
<svg style="left:112px;top:224px" width="16" height="16" viewBox="0 0 16 16"><path d="M.8 3.500q0-2 2-2h2.500q1 0 1.500 1l.5 .5h5q2 0 2 2v5.500q0 2-2 2h-9.500q-2 0-2-2z" fill="url(#fg)" stroke="#c98f30"/><path d="M1.800 5.500h11.500" stroke="#fffbe0" stroke-opacity=".8"/></svg>
<span style="left:131.40px;top:225.06px;font-size:11px;line-height:15px;transform:scaleX(0.8094);transform-origin:0 50%;">FUN</span>
<div style="left:103px;top:249px;width:9px;height:1px;background:repeating-linear-gradient(90deg,#fff 0 1px,#b4b4b4 1px 2px)"></div>
<svg style="left:98px;top:244.3px" width="9" height="9" viewBox="0 0 9 9"><rect x=".5" y=".5" width="8" height="7.500" rx="1.500" fill="#fff" stroke="#9ccacc"/><rect x="1.300" y="4.500" width="6.400" height="2.800" fill="#e6e6e6"/><path d="M2 4.200H7" stroke="#111" stroke-width="1.400"/></svg>
<svg style="left:112px;top:241px" width="16" height="16" viewBox="0 0 16 16"><path d="M.8 3.500q0-2 2-2h2.500q1 0 1.500 1l.5 .5h5q2 0 2 2v5.500q0 2-2 2h-9.500q-2 0-2-2z" fill="url(#fg)" stroke="#c98f30"/><path d="M1.800 5.500h11.500" stroke="#fffbe0" stroke-opacity=".8"/></svg>
<span style="left:131.40px;top:242.52px;font-size:11px;line-height:15px;transform:scaleX(0.8761);transform-origin:0 50%;">ProcessImage</span>
<div style="left:121px;top:266px;width:9px;height:1px;background:repeating-linear-gradient(90deg,#fff 0 1px,#b4b4b4 1px 2px)"></div>
<svg style="left:130px;top:258px" width="16" height="16" viewBox="0 0 16 16"><path d="M7.500 5.500v5q0 1 1.500 1.500M7.500 6.500h2" fill="none" stroke="#999"/><path d="M1 4.200l3-3.200 3.400 2.800-3 3.200z" fill="#ecec00" stroke="#222" stroke-width=".9"/><path d="M9.600 6.300l2.400-2.600 2.500 2-2.400 2.600z" fill="#c4107c" stroke="#222" stroke-width=".9"/><path d="M8.800 12.600l2.500-2.700 2.300 1.900-2.500 2.700z" fill="#20b8b8" stroke="#222" stroke-width=".9"/></svg>
<span style="left:150.10px;top:259.98px;font-size:11px;line-height:15px;transform:scaleX(0.8727);transform-origin:0 50%;">stProcImageType (STRUCT)</span>
<div style="left:121px;top:284px;width:9px;height:1px;background:repeating-linear-gradient(90deg,#fff 0 1px,#b4b4b4 1px 2px)"></div>
<svg style="left:130px;top:276px" width="16" height="16" viewBox="0 0 16 16"><path d="M3.500 1.500h7l3.500 3.500v9.500h-11.500v-12q0-1 1-1z" fill="#fff" stroke="#333"/><path d="M10 6.500h3M10 8.500h3M10 10.500h3" stroke="#bbb"/><rect x="4.600" y="3" width="4" height="4" fill="#f0e020" stroke="#b02020" stroke-width=".9"/><rect x="4.600" y="7" width="4" height="4" fill="#e8306a" stroke="#3030a0" stroke-width=".9"/><rect x=".7" y="6.200" width="3.800" height="4.400" fill="#d8e820" stroke="#20a020" stroke-width="1.100"/></svg>
<span style="left:150.10px;top:277.44px;font-size:11px;line-height:15px;transform:scaleX(0.8783);transform-origin:0 50%;">ProcessImage01</span>
<div style="left:130px;top:293.40000000000003px;width:162px;height:17px;background:#f2f2f2"></div>
<div style="left:121px;top:301px;width:9px;height:1px;background:repeating-linear-gradient(90deg,#fff 0 1px,#b4b4b4 1px 2px)"></div>
<svg style="left:130px;top:293px" width="16" height="16" viewBox="0 0 16 16"><path d="M3.500 1.500h7l3.500 3.500v9.500h-11.500v-12q0-1 1-1z" fill="#fff" stroke="#333"/><path d="M10 6.500h3M10 8.500h3M10 10.500h3" stroke="#bbb"/><rect x="4.600" y="3" width="4" height="4" fill="#f0e020" stroke="#b02020" stroke-width=".9"/><rect x="4.600" y="7" width="4" height="4" fill="#e8306a" stroke="#3030a0" stroke-width=".9"/><rect x=".7" y="6.200" width="3.800" height="4.400" fill="#d8e820" stroke="#20a020" stroke-width="1.100"/></svg>
<span style="left:150.10px;top:294.90px;font-size:11px;line-height:15px;transform:scaleX(0.8783);transform-origin:0 50%;">ProcessImage02</span>
<div style="left:121px;top:319px;width:9px;height:1px;background:repeating-linear-gradient(90deg,#fff 0 1px,#b4b4b4 1px 2px)"></div>
<svg style="left:130px;top:311px" width="16" height="16" viewBox="0 0 16 16"><path d="M3.500 1.500h7l3.500 3.500v9.500h-11.500v-12q0-1 1-1z" fill="#fff" stroke="#333"/><path d="M10 6.500h3M10 8.500h3M10 10.500h3" stroke="#bbb"/><rect x="4.600" y="3" width="4" height="4" fill="#f0e020" stroke="#b02020" stroke-width=".9"/><rect x="4.600" y="7" width="4" height="4" fill="#e8306a" stroke="#3030a0" stroke-width=".9"/><rect x=".7" y="6.200" width="3.800" height="4.400" fill="#d8e820" stroke="#20a020" stroke-width="1.100"/></svg>
<span style="left:150.10px;top:312.36px;font-size:11px;line-height:15px;transform:scaleX(0.8783);transform-origin:0 50%;">ProcessImage03</span>
<div style="left:121px;top:336px;width:9px;height:1px;background:repeating-linear-gradient(90deg,#fff 0 1px,#b4b4b4 1px 2px)"></div>
<svg style="left:130px;top:328px" width="16" height="16" viewBox="0 0 16 16"><path d="M3.500 1.500h7l3.500 3.500v9.500h-11.500v-12q0-1 1-1z" fill="#fff" stroke="#333"/><path d="M10 6.500h3M10 8.500h3M10 10.500h3" stroke="#bbb"/><rect x="4.600" y="3" width="4" height="4" fill="#f0e020" stroke="#b02020" stroke-width=".9"/><rect x="4.600" y="7" width="4" height="4" fill="#e8306a" stroke="#3030a0" stroke-width=".9"/><rect x=".7" y="6.200" width="3.800" height="4.400" fill="#d8e820" stroke="#20a020" stroke-width="1.100"/></svg>
<span style="left:150.10px;top:329.82px;font-size:11px;line-height:15px;transform:scaleX(0.8783);transform-origin:0 50%;">ProcessImage04</span>
<div style="left:121px;top:354px;width:9px;height:1px;background:repeating-linear-gradient(90deg,#fff 0 1px,#b4b4b4 1px 2px)"></div>
<svg style="left:130px;top:346px" width="16" height="16" viewBox="0 0 16 16"><path d="M3.500 1.500h7l3.500 3.500v9.500h-11.500v-12q0-1 1-1z" fill="#fff" stroke="#333"/><path d="M10 6.500h3M10 8.500h3M10 10.500h3" stroke="#bbb"/><rect x="4.600" y="3" width="4" height="4" fill="#f0e020" stroke="#b02020" stroke-width=".9"/><rect x="4.600" y="7" width="4" height="4" fill="#e8306a" stroke="#3030a0" stroke-width=".9"/><rect x=".7" y="6.200" width="3.800" height="4.400" fill="#d8e820" stroke="#20a020" stroke-width="1.100"/></svg>
<span style="left:150.10px;top:347.28px;font-size:11px;line-height:15px;transform:scaleX(0.8783);transform-origin:0 50%;">ProcessImage05</span>
<div style="left:121px;top:371px;width:9px;height:1px;background:repeating-linear-gradient(90deg,#fff 0 1px,#b4b4b4 1px 2px)"></div>
<svg style="left:130px;top:363px" width="16" height="16" viewBox="0 0 16 16"><path d="M3.500 1.500h7l3.500 3.500v9.500h-11.500v-12q0-1 1-1z" fill="#fff" stroke="#333"/><path d="M10 6.500h3M10 8.500h3M10 10.500h3" stroke="#bbb"/><rect x="4.600" y="3" width="4" height="4" fill="#f0e020" stroke="#b02020" stroke-width=".9"/><rect x="4.600" y="7" width="4" height="4" fill="#e8306a" stroke="#3030a0" stroke-width=".9"/><rect x=".7" y="6.200" width="3.800" height="4.400" fill="#d8e820" stroke="#20a020" stroke-width="1.100"/></svg>
<span style="left:150.10px;top:364.74px;font-size:11px;line-height:15px;transform:scaleX(0.8783);transform-origin:0 50%;">ProcessImage06</span>
<div style="left:121px;top:389px;width:9px;height:1px;background:repeating-linear-gradient(90deg,#fff 0 1px,#b4b4b4 1px 2px)"></div>
<svg style="left:130px;top:381px" width="16" height="16" viewBox="0 0 16 16"><path d="M3.500 1.500h7l3.500 3.500v9.500h-11.500v-12q0-1 1-1z" fill="#fff" stroke="#333"/><path d="M10 6.500h3M10 8.500h3M10 10.500h3" stroke="#bbb"/><rect x="4.600" y="3" width="4" height="4" fill="#f0e020" stroke="#b02020" stroke-width=".9"/><rect x="4.600" y="7" width="4" height="4" fill="#e8306a" stroke="#3030a0" stroke-width=".9"/><rect x=".7" y="6.200" width="3.800" height="4.400" fill="#d8e820" stroke="#20a020" stroke-width="1.100"/></svg>
<span style="left:150.10px;top:382.20px;font-size:11px;line-height:15px;transform:scaleX(0.8783);transform-origin:0 50%;">ProcessImage07</span>
<div style="left:121px;top:406px;width:9px;height:1px;background:repeating-linear-gradient(90deg,#fff 0 1px,#b4b4b4 1px 2px)"></div>
<svg style="left:130px;top:398px" width="16" height="16" viewBox="0 0 16 16"><path d="M3.500 1.500h7l3.500 3.500v9.500h-11.500v-12q0-1 1-1z" fill="#fff" stroke="#333"/><path d="M10 6.500h3M10 8.500h3M10 10.500h3" stroke="#bbb"/><rect x="4.600" y="3" width="4" height="4" fill="#f0e020" stroke="#b02020" stroke-width=".9"/><rect x="4.600" y="7" width="4" height="4" fill="#e8306a" stroke="#3030a0" stroke-width=".9"/><rect x=".7" y="6.200" width="3.800" height="4.400" fill="#d8e820" stroke="#20a020" stroke-width="1.100"/></svg>
<span style="left:150.10px;top:399.66px;font-size:11px;line-height:15px;transform:scaleX(0.8783);transform-origin:0 50%;">ProcessImage08</span>
<div style="left:121px;top:424px;width:9px;height:1px;background:repeating-linear-gradient(90deg,#fff 0 1px,#b4b4b4 1px 2px)"></div>
<svg style="left:130px;top:416px" width="16" height="16" viewBox="0 0 16 16"><path d="M3.500 1.500h7l3.500 3.500v9.500h-11.500v-12q0-1 1-1z" fill="#fff" stroke="#333"/><path d="M10 6.500h3M10 8.500h3M10 10.500h3" stroke="#bbb"/><rect x="4.600" y="3" width="4" height="4" fill="#f0e020" stroke="#b02020" stroke-width=".9"/><rect x="4.600" y="7" width="4" height="4" fill="#e8306a" stroke="#3030a0" stroke-width=".9"/><rect x=".7" y="6.200" width="3.800" height="4.400" fill="#d8e820" stroke="#20a020" stroke-width="1.100"/></svg>
<span style="left:150.10px;top:417.12px;font-size:11px;line-height:15px;transform:scaleX(0.8783);transform-origin:0 50%;">ProcessImage09</span>
<div style="left:121px;top:441px;width:9px;height:1px;background:repeating-linear-gradient(90deg,#fff 0 1px,#b4b4b4 1px 2px)"></div>
<svg style="left:130px;top:433px" width="16" height="16" viewBox="0 0 16 16"><path d="M3.500 1.500h7l3.500 3.500v9.500h-11.500v-12q0-1 1-1z" fill="#fff" stroke="#333"/><path d="M10 6.500h3M10 8.500h3M10 10.500h3" stroke="#bbb"/><rect x="4.600" y="3" width="4" height="4" fill="#f0e020" stroke="#b02020" stroke-width=".9"/><rect x="4.600" y="7" width="4" height="4" fill="#e8306a" stroke="#3030a0" stroke-width=".9"/><rect x=".7" y="6.200" width="3.800" height="4.400" fill="#d8e820" stroke="#20a020" stroke-width="1.100"/></svg>
<span style="left:150.10px;top:434.58px;font-size:11px;line-height:15px;transform:scaleX(0.8783);transform-origin:0 50%;">ProcessImage10</span>
<div style="left:103px;top:459px;width:9px;height:1px;background:repeating-linear-gradient(90deg,#fff 0 1px,#b4b4b4 1px 2px)"></div>
<svg style="left:112px;top:451px" width="16" height="16" viewBox="0 0 16 16"><circle cx="7.500" cy="8" r="6.500" fill="#1c5cc8"/><circle cx="6.500" cy="6.500" r="4" fill="#3c84e8" fill-opacity=".7"/><path d="M4 4.500q2.500-2 4.500-.5t2 2.500q-1.500 2.500-3.500 1.500t-3.500-1.500q-.5-1 .5-2z" fill="#3cb83c"/><path d="M6 11q2-1 3.500 0t-.5 2.500q-2.500.5-3-2.500z" fill="#3cb83c"/><ellipse cx="7.500" cy="8" rx="8" ry="3.200" fill="none" stroke="#a8d0ff" stroke-width="1" transform="rotate(-32 7.500 8)"/></svg>
<span style="left:131.40px;top:452.04px;font-size:11px;line-height:15px;transform:scaleX(0.9042);transform-origin:0 50%;">gvlConfigurationController</span>
<div style="left:103px;top:476px;width:9px;height:1px;background:repeating-linear-gradient(90deg,#fff 0 1px,#b4b4b4 1px 2px)"></div>
<svg style="left:112px;top:468px" width="16" height="16" viewBox="0 0 16 16"><circle cx="7.500" cy="8" r="6.500" fill="#1c5cc8"/><circle cx="6.500" cy="6.500" r="4" fill="#3c84e8" fill-opacity=".7"/><path d="M4 4.500q2.500-2 4.500-.5t2 2.500q-1.500 2.500-3.500 1.500t-3.500-1.500q-.5-1 .5-2z" fill="#3cb83c"/><path d="M6 11q2-1 3.500 0t-.5 2.500q-2.500.5-3-2.500z" fill="#3cb83c"/><ellipse cx="7.500" cy="8" rx="8" ry="3.200" fill="none" stroke="#a8d0ff" stroke-width="1" transform="rotate(-32 7.500 8)"/></svg>
<span style="left:131.40px;top:469.50px;font-size:11px;line-height:15px;transform:scaleX(0.9044);transform-origin:0 50%;">gvlConfigurationGenerator</span>
<div style="left:103px;top:493px;width:9px;height:1px;background:repeating-linear-gradient(90deg,#fff 0 1px,#b4b4b4 1px 2px)"></div>
<svg style="left:112px;top:485px" width="16" height="16" viewBox="0 0 16 16"><circle cx="7.500" cy="8" r="6.500" fill="#1c5cc8"/><circle cx="6.500" cy="6.500" r="4" fill="#3c84e8" fill-opacity=".7"/><path d="M4 4.500q2.500-2 4.500-.5t2 2.500q-1.500 2.500-3.500 1.500t-3.500-1.500q-.5-1 .5-2z" fill="#3cb83c"/><path d="M6 11q2-1 3.500 0t-.5 2.500q-2.500.5-3-2.500z" fill="#3cb83c"/><ellipse cx="7.500" cy="8" rx="8" ry="3.200" fill="none" stroke="#a8d0ff" stroke-width="1" transform="rotate(-32 7.500 8)"/></svg>
<span style="left:131.40px;top:486.96px;font-size:11px;line-height:15px;transform:scaleX(0.8911);transform-origin:0 50%;">gvlConfigurationProcessImage</span>
<div style="left:103px;top:511px;width:9px;height:1px;background:repeating-linear-gradient(90deg,#fff 0 1px,#b4b4b4 1px 2px)"></div>
<svg style="left:112px;top:503px" width="16" height="16" viewBox="0 0 16 16"><circle cx="7.500" cy="8" r="6.500" fill="#1c5cc8"/><circle cx="6.500" cy="6.500" r="4" fill="#3c84e8" fill-opacity=".7"/><path d="M4 4.500q2.500-2 4.500-.5t2 2.500q-1.500 2.500-3.500 1.500t-3.500-1.500q-.5-1 .5-2z" fill="#3cb83c"/><path d="M6 11q2-1 3.500 0t-.5 2.500q-2.500.5-3-2.500z" fill="#3cb83c"/><ellipse cx="7.500" cy="8" rx="8" ry="3.200" fill="none" stroke="#a8d0ff" stroke-width="1" transform="rotate(-32 7.500 8)"/></svg>
<span style="left:131.40px;top:504.42px;font-size:11px;line-height:15px;transform:scaleX(0.8679);transform-origin:0 50%;">gvlOem</span>
<div style="left:103px;top:528px;width:9px;height:1px;background:repeating-linear-gradient(90deg,#fff 0 1px,#b4b4b4 1px 2px)"></div>
<svg style="left:112px;top:520px" width="16" height="16" viewBox="0 0 16 16"><circle cx="7.500" cy="8" r="6.500" fill="#1c5cc8"/><circle cx="6.500" cy="6.500" r="4" fill="#3c84e8" fill-opacity=".7"/><path d="M4 4.500q2.500-2 4.500-.5t2 2.500q-1.500 2.500-3.500 1.500t-3.500-1.500q-.5-1 .5-2z" fill="#3cb83c"/><path d="M6 11q2-1 3.500 0t-.5 2.500q-2.500.5-3-2.500z" fill="#3cb83c"/><ellipse cx="7.500" cy="8" rx="8" ry="3.200" fill="none" stroke="#a8d0ff" stroke-width="1" transform="rotate(-32 7.500 8)"/></svg>
<span style="left:131.40px;top:521.88px;font-size:11px;line-height:15px;transform:scaleX(0.8794);transform-origin:0 50%;">gvlOemConfig</span>
<div style="left:103px;top:546px;width:9px;height:1px;background:repeating-linear-gradient(90deg,#fff 0 1px,#b4b4b4 1px 2px)"></div>
<svg style="left:112px;top:538px" width="16" height="16" viewBox="0 0 16 16"><path d="M2.500 1.500h7.500l3 3v10h-10.500z" fill="#fff" stroke="#222"/><path d="M10 1.500v3h3" fill="none" stroke="#222"/><path d="M4.500 6.500h3M8.500 6.500h3M4.500 9h3M8.500 9h3M4.500 11.500h3M8.500 11.500h3" stroke="#888"/><rect x=".3" y="6" width="2.400" height="4" fill="#20988a"/></svg>
<span style="left:131.40px;top:539.34px;font-size:11px;line-height:15px;transform:scaleX(0.8560);transform-origin:0 50%;">ImagePool_OEM</span>
<div style="left:103px;top:563px;width:9px;height:1px;background:repeating-linear-gradient(90deg,#fff 0 1px,#b4b4b4 1px 2px)"></div>
<svg style="left:98px;top:558.6px" width="9" height="9" viewBox="0 0 9 9"><rect x=".5" y=".5" width="8" height="7.500" rx="1.500" fill="#fff" stroke="#9ccacc"/><rect x="1.300" y="4.500" width="6.400" height="2.800" fill="#e6e6e6"/><path d="M2 4.200H7" stroke="#111" stroke-width="1.400"/><path d="M4.500 1.700V6.700" stroke="#111" stroke-width="1.300"/></svg>
<svg style="left:112px;top:555px" width="16" height="16" viewBox="0 0 16 16"><path d="M2.500 1.500h7l3 3v10h-10z" fill="#fff" stroke="#222"/><path d="M9.500 1.500v3h3" fill="none" stroke="#222"/><path d="M4.500 5.500h5.500M4.500 7.500h5.500M4.500 9.500h5.500M4.500 11.500h5.500M4.500 13h5.500" stroke="#3a3af0"/></svg>
<span style="left:131.40px;top:556.80px;font-size:11px;line-height:15px;transform:scaleX(0.8628);transform-origin:0 50%;">SaveRetain (PRG)</span>
<div style="left:103px;top:581px;width:9px;height:1px;background:repeating-linear-gradient(90deg,#fff 0 1px,#b4b4b4 1px 2px)"></div>
<svg style="left:112px;top:573px" width="16" height="16" viewBox="0 0 16 16"><path d="M2.500 1.500h7.500l3 3v10h-10.500z" fill="#fff" stroke="#222"/><path d="M10 1.500v3h3" fill="none" stroke="#222"/><path d="M4.500 6.500h3M8.500 6.500h3M4.500 9h3M8.500 9h3M4.500 11.500h3M8.500 11.500h3" stroke="#888"/><rect x=".3" y="6" width="2.400" height="4" fill="#20988a"/></svg>
<span style="left:131.40px;top:574.26px;font-size:11px;line-height:15px;transform:scaleX(0.7997);transform-origin:0 50%;">TL_OEM</span>
<div style="left:84px;top:598px;width:10px;height:1px;background:repeating-linear-gradient(90deg,#fff 0 1px,#b4b4b4 1px 2px)"></div>
<svg style="left:79.5px;top:593.5px" width="9" height="9" viewBox="0 0 9 9"><rect x=".5" y=".5" width="8" height="7.500" rx="1.500" fill="#fff" stroke="#9ccacc"/><rect x="1.300" y="4.500" width="6.400" height="2.800" fill="#e6e6e6"/><path d="M2 4.200H7" stroke="#111" stroke-width="1.400"/><path d="M4.500 1.700V6.700" stroke="#111" stroke-width="1.300"/></svg>
<svg style="left:93.5px;top:590px" width="16" height="16" viewBox="0 0 16 16"><path d="M.8 3.500q0-2 2-2h2.500q1 0 1.500 1l.5 .5h5q2 0 2 2v5.500q0 2-2 2h-9.500q-2 0-2-2z" fill="url(#fg)" stroke="#c98f30"/><path d="M1.800 5.500h11.500" stroke="#fffbe0" stroke-opacity=".8"/></svg>
<span style="left:113.70px;top:591.72px;font-size:11px;line-height:15px;transform:scaleX(0.8879);transform-origin:0 50%;">Bootapplication</span>
<div style="left:84px;top:616px;width:10px;height:1px;background:repeating-linear-gradient(90deg,#fff 0 1px,#b4b4b4 1px 2px)"></div>
<svg style="left:93.5px;top:608px" width="16" height="16" viewBox="0 0 16 16"><path d="M1.5 5l2-3h2l1 3z" fill="#20a0a0" stroke="#000" stroke-width=".8"/><rect x="1.5" y="5" width="4" height="10" fill="#20b0b0" stroke="#000" stroke-width=".8"/><rect x="5.5" y="4" width="4" height="11" fill="#e02020" stroke="#000" stroke-width=".8"/><rect x="9.5" y="5" width="3" height="10" fill="#e8e020" stroke="#000" stroke-width=".8"/><path d="M12.5 5l2-2v10l-2 2z" fill="#c0b010" stroke="#000" stroke-width=".8"/><path d="M5.5 4l2-2.500h3l-1 2.500M9.500 5l2-2h3" fill="#f0f060" stroke="#000" stroke-width=".8"/></svg>
<span style="left:113.70px;top:609.18px;font-size:11px;line-height:15px;transform:scaleX(0.8865);transform-origin:0 50%;">Library Manager</span>
<div style="left:84px;top:633px;width:10px;height:1px;background:repeating-linear-gradient(90deg,#fff 0 1px,#b4b4b4 1px 2px)"></div>
<svg style="left:93.5px;top:625px" width="16" height="16" viewBox="0 0 16 16"><path d="M2.500 1.500h7l3 3v10h-10z" fill="#fff" stroke="#222"/><path d="M9.500 1.500v3h3" fill="none" stroke="#222"/><path d="M4.500 5.500h5.500M4.500 7.500h5.500M4.500 9.500h5.500M4.500 11.500h5.500M4.500 13h5.500" stroke="#3a3af0"/></svg>
<span style="left:113.70px;top:626.64px;font-size:11px;line-height:15px;transform:scaleX(0.8215);transform-origin:0 50%;">PLC_Main (PRG)</span>
<div style="left:84px;top:651px;width:10px;height:1px;background:repeating-linear-gradient(90deg,#fff 0 1px,#b4b4b4 1px 2px)"></div>
<svg style="left:79.5px;top:645.9px" width="9" height="9" viewBox="0 0 9 9"><rect x=".5" y=".5" width="8" height="7.500" rx="1.500" fill="#fff" stroke="#9ccacc"/><rect x="1.300" y="4.500" width="6.400" height="2.800" fill="#e6e6e6"/><path d="M2 4.200H7" stroke="#111" stroke-width="1.400"/><path d="M4.500 1.700V6.700" stroke="#111" stroke-width="1.300"/></svg>
<svg style="left:93.5px;top:643px" width="16" height="16" viewBox="0 0 16 16"><path d="M2.500 1.500h7l3 3v10h-10z" fill="#fff" stroke="#222"/><path d="M9.500 1.500v3h3" fill="none" stroke="#222"/><path d="M4.500 5.500h5.500M4.500 7.500h5.500M4.500 9.500h5.500M4.500 11.500h5.500M4.500 13h5.500" stroke="#3a3af0"/></svg>
<span style="left:113.70px;top:644.10px;font-size:11px;line-height:15px;transform:scaleX(0.8039);transform-origin:0 50%;">PLC_PRG (PRG)</span>
<div style="left:84px;top:668px;width:10px;height:1px;background:repeating-linear-gradient(90deg,#fff 0 1px,#b4b4b4 1px 2px)"></div>
<svg style="left:93.5px;top:660px" width="16" height="16" viewBox="0 0 16 16"><path d="M2.500 1.500h7l3 3v10h-10z" fill="#fff" stroke="#222"/><path d="M9.500 1.500v3h3" fill="none" stroke="#222"/><path d="M4.500 5.500h5.500M4.500 7.500h5.500M4.500 9.500h5.500M4.500 11.500h5.500M4.500 13h5.500" stroke="#3a3af0"/></svg>
<span style="left:113.70px;top:661.56px;font-size:11px;line-height:15px;transform:scaleX(0.8211);transform-origin:0 50%;">PLC_PRG_Alarms (PRG)</span>
<div style="left:84px;top:686px;width:10px;height:1px;background:repeating-linear-gradient(90deg,#fff 0 1px,#b4b4b4 1px 2px)"></div>
<svg style="left:93.5px;top:678px" width="16" height="16" viewBox="0 0 16 16"><path d="M2.500 1.500h7l3 3v10h-10z" fill="#fff" stroke="#222"/><path d="M9.500 1.500v3h3" fill="none" stroke="#222"/><path d="M4.500 5.500h5.500M4.500 7.500h5.500M4.500 9.500h5.500M4.500 11.500h5.500M4.500 13h5.500" stroke="#3a3af0"/></svg>
<span style="left:113.70px;top:679.02px;font-size:11px;line-height:15px;transform:scaleX(0.8141);transform-origin:0 50%;">PRG_Visu (PRG)</span>
<div style="left:84px;top:703px;width:10px;height:1px;background:repeating-linear-gradient(90deg,#fff 0 1px,#b4b4b4 1px 2px)"></div>
<svg style="left:79.5px;top:698.3px" width="9" height="9" viewBox="0 0 9 9"><rect x=".5" y=".5" width="8" height="7.500" rx="1.500" fill="#fff" stroke="#9ccacc"/><rect x="1.300" y="4.500" width="6.400" height="2.800" fill="#e6e6e6"/><path d="M2 4.200H7" stroke="#111" stroke-width="1.400"/></svg>
<svg style="left:93.5px;top:695px" width="16" height="16" viewBox="0 0 16 16"><path d="M1.500 3.500l3-2h9v11l-3 2h-9z" fill="#e0e0e0" stroke="#333"/><path d="M5.500 2v11M9.500 2v11" stroke="#333"/><rect x="3" y="5" width="1.600" height="1.600" fill="#20d020"/><rect x="7" y="5" width="1.600" height="1.600" fill="#d02020"/><rect x="11" y="5" width="1.600" height="1.600" fill="#d02020"/><circle cx="9.500" cy="10.500" r="3" fill="none" stroke="#f0e010" stroke-width="2.600" stroke-dasharray="1.600 1"/><circle cx="9.500" cy="10.500" r="2.400" fill="#f0e010" stroke="#333" stroke-width=".5"/><circle cx="9.500" cy="10.500" r="1" fill="#333"/></svg>
<span style="left:113.70px;top:696.48px;font-size:11px;line-height:15px;transform:scaleX(0.9011);transform-origin:0 50%;">Task Configuration</span>
<div style="left:103px;top:720px;width:9px;height:1px;background:repeating-linear-gradient(90deg,#fff 0 1px,#b4b4b4 1px 2px)"></div>
<svg style="left:98px;top:715.7px" width="9" height="9" viewBox="0 0 9 9"><rect x=".5" y=".5" width="8" height="7.500" rx="1.500" fill="#fff" stroke="#9ccacc"/><rect x="1.300" y="4.500" width="6.400" height="2.800" fill="#e6e6e6"/><path d="M2 4.200H7" stroke="#111" stroke-width="1.400"/></svg>
<svg style="left:112px;top:712px" width="16" height="16" viewBox="0 0 16 16"><path d="M.8 9l6.200 3.400 7.800-4.400M.8 11l6.200 3.400 7.800-4.400" fill="none" stroke="#222" stroke-width=".9"/><path d="M.8 7l7.400-4.200 6.600 3.200-7.800 4.400z" fill="#fff" stroke="#222" stroke-width=".9"/><path d="M7.200 .5v4.500" stroke="#1a2aa0" stroke-width="1.800"/><path d="M4.600 4h5.200l-2.600 3.200z" fill="#1a2aa0"/></svg>
<span style="left:131.40px;top:713.94px;font-size:11px;line-height:15px;transform:scaleX(0.8694);transform-origin:0 50%;">MainTask</span>
<div style="left:121px;top:738px;width:9px;height:1px;background:repeating-linear-gradient(90deg,#fff 0 1px,#b4b4b4 1px 2px)"></div>
<svg style="left:130px;top:730px" width="16" height="16" viewBox="0 0 16 16"><path d="M3.500 1.500h7l3.500 3.500v9.500h-11.500v-12q0-1 1-1z" fill="#fff" stroke="#333"/><path d="M10 6.500h3M10 8.500h3M10 10.500h3" stroke="#bbb"/><rect x="4.800" y="2.800" width="3.800" height="3.800" fill="#fff" stroke="#b02828" stroke-width="1.100"/><rect x="4.800" y="6.800" width="3.800" height="3.800" fill="#fff" stroke="#2828a0" stroke-width="1.100"/><rect x=".8" y="6.400" width="3.800" height="4.200" fill="#fff" stroke="#20a020" stroke-width="1.200"/></svg>
<span style="left:150.10px;top:731.40px;font-size:11px;line-height:15px;transform:scaleX(0.7847);transform-origin:0 50%;">PLC_PRG</span>
<div style="left:121px;top:755px;width:9px;height:1px;background:repeating-linear-gradient(90deg,#fff 0 1px,#b4b4b4 1px 2px)"></div>
<svg style="left:130px;top:747px" width="16" height="16" viewBox="0 0 16 16"><path d="M3.500 1.500h7l3.500 3.500v9.500h-11.500v-12q0-1 1-1z" fill="#fff" stroke="#333"/><path d="M10 6.500h3M10 8.500h3M10 10.500h3" stroke="#bbb"/><rect x="4.800" y="2.800" width="3.800" height="3.800" fill="#fff" stroke="#b02828" stroke-width="1.100"/><rect x="4.800" y="6.800" width="3.800" height="3.800" fill="#fff" stroke="#2828a0" stroke-width="1.100"/><rect x=".8" y="6.400" width="3.800" height="4.200" fill="#fff" stroke="#20a020" stroke-width="1.200"/></svg>
<span style="left:150.10px;top:748.86px;font-size:11px;line-height:15px;transform:scaleX(0.7956);transform-origin:0 50%;">PRG_Visu</span>
<div style="left:121px;top:773px;width:9px;height:1px;background:repeating-linear-gradient(90deg,#fff 0 1px,#b4b4b4 1px 2px)"></div>
<svg style="left:130px;top:765px" width="16" height="16" viewBox="0 0 16 16"><path d="M3.500 1.500h7l3.500 3.500v9.500h-11.500v-12q0-1 1-1z" fill="#fff" stroke="#333"/><path d="M10 6.500h3M10 8.500h3M10 10.500h3" stroke="#bbb"/><rect x="4.800" y="2.800" width="3.800" height="3.800" fill="#fff" stroke="#b02828" stroke-width="1.100"/><rect x="4.800" y="6.800" width="3.800" height="3.800" fill="#fff" stroke="#2828a0" stroke-width="1.100"/><rect x=".8" y="6.400" width="3.800" height="4.200" fill="#fff" stroke="#20a020" stroke-width="1.200"/></svg>
<span style="left:150.10px;top:766.32px;font-size:11px;line-height:15px;transform:scaleX(0.8158);transform-origin:0 50%;">PLC_Main</span>
<div style="left:103px;top:790px;width:9px;height:1px;background:repeating-linear-gradient(90deg,#fff 0 1px,#b4b4b4 1px 2px)"></div>
<svg style="left:98px;top:785.6px" width="9" height="9" viewBox="0 0 9 9"><rect x=".5" y=".5" width="8" height="7.500" rx="1.500" fill="#fff" stroke="#9ccacc"/><rect x="1.300" y="4.500" width="6.400" height="2.800" fill="#e6e6e6"/><path d="M2 4.200H7" stroke="#111" stroke-width="1.400"/></svg>
<svg style="left:112px;top:782px" width="16" height="16" viewBox="0 0 16 16"><path d="M.8 9l6.200 3.400 7.800-4.400M.8 11l6.200 3.400 7.800-4.400" fill="none" stroke="#222" stroke-width=".9"/><path d="M.8 7l7.400-4.200 6.600 3.200-7.800 4.400z" fill="#fff" stroke="#222" stroke-width=".9"/><path d="M7.200 .5v4.500" stroke="#1a2aa0" stroke-width="1.800"/><path d="M4.600 4h5.200l-2.600 3.200z" fill="#1a2aa0"/></svg>
<span style="left:131.40px;top:783.78px;font-size:11px;line-height:15px;transform:scaleX(0.8893);transform-origin:0 50%;">SaveRetainTask</span>
<div style="left:121px;top:808px;width:9px;height:1px;background:repeating-linear-gradient(90deg,#fff 0 1px,#b4b4b4 1px 2px)"></div>
<svg style="left:130px;top:800px" width="16" height="16" viewBox="0 0 16 16"><path d="M3.500 1.500h7l3.500 3.500v9.500h-11.500v-12q0-1 1-1z" fill="#fff" stroke="#333"/><path d="M10 6.500h3M10 8.500h3M10 10.500h3" stroke="#bbb"/><rect x="4.800" y="2.800" width="3.800" height="3.800" fill="#fff" stroke="#b02828" stroke-width="1.100"/><rect x="4.800" y="6.800" width="3.800" height="3.800" fill="#fff" stroke="#2828a0" stroke-width="1.100"/><rect x=".8" y="6.400" width="3.800" height="4.200" fill="#fff" stroke="#20a020" stroke-width="1.200"/></svg>
<span style="left:150.10px;top:801.24px;font-size:11px;line-height:15px;transform:scaleX(0.8879);transform-origin:0 50%;">SaveRetain</span>
<div style="left:103px;top:825px;width:9px;height:1px;background:repeating-linear-gradient(90deg,#fff 0 1px,#b4b4b4 1px 2px)"></div>
<svg style="left:98px;top:820.5px" width="9" height="9" viewBox="0 0 9 9"><rect x=".5" y=".5" width="8" height="7.500" rx="1.500" fill="#fff" stroke="#9ccacc"/><rect x="1.300" y="4.500" width="6.400" height="2.800" fill="#e6e6e6"/><path d="M2 4.200H7" stroke="#111" stroke-width="1.400"/></svg>
<svg style="left:112px;top:817px" width="16" height="16" viewBox="0 0 16 16"><path d="M.8 9l6.200 3.400 7.800-4.400M.8 11l6.200 3.400 7.800-4.400" fill="none" stroke="#222" stroke-width=".9"/><path d="M.8 7l7.400-4.200 6.600 3.200-7.800 4.400z" fill="#fff" stroke="#222" stroke-width=".9"/><path d="M7.200 .5v4.500" stroke="#1a2aa0" stroke-width="1.800"/><path d="M4.600 4h5.200l-2.600 3.200z" fill="#1a2aa0"/></svg>
<span style="left:131.40px;top:818.70px;font-size:11px;line-height:15px;transform:scaleX(0.8373);transform-origin:0 50%;">VISU_TASK</span>
<div style="left:121px;top:843px;width:9px;height:1px;background:repeating-linear-gradient(90deg,#fff 0 1px,#b4b4b4 1px 2px)"></div>
<svg style="left:130px;top:835px" width="16" height="16" viewBox="0 0 16 16"><path d="M3.500 1.500h7l3.500 3.500v9.500h-11.500v-12q0-1 1-1z" fill="#fff" stroke="#333"/><path d="M10 6.500h3M10 8.500h3M10 10.500h3" stroke="#bbb"/><rect x="4.800" y="2.800" width="3.800" height="3.800" fill="#fff" stroke="#b02828" stroke-width="1.100"/><rect x="4.800" y="6.800" width="3.800" height="3.800" fill="#fff" stroke="#2828a0" stroke-width="1.100"/><rect x=".8" y="6.400" width="3.800" height="4.200" fill="#fff" stroke="#20a020" stroke-width="1.200"/></svg>
<span style="left:150.10px;top:836.16px;font-size:11px;line-height:15px;transform:scaleX(0.8382);transform-origin:0 50%;">VisuElems.Visu_Prg</span>
<div style="left:121px;top:860px;width:9px;height:1px;background:repeating-linear-gradient(90deg,#fff 0 1px,#b4b4b4 1px 2px)"></div>
<svg style="left:130px;top:852px" width="16" height="16" viewBox="0 0 16 16"><path d="M3.500 1.500h7l3.500 3.500v9.500h-11.500v-12q0-1 1-1z" fill="#fff" stroke="#333"/><path d="M10 6.500h3M10 8.500h3M10 10.500h3" stroke="#bbb"/><rect x="4.800" y="2.800" width="3.800" height="3.800" fill="#fff" stroke="#b02828" stroke-width="1.100"/><rect x="4.800" y="6.800" width="3.800" height="3.800" fill="#fff" stroke="#2828a0" stroke-width="1.100"/><rect x=".8" y="6.400" width="3.800" height="4.200" fill="#fff" stroke="#20a020" stroke-width="1.200"/></svg>
<span style="left:150.10px;top:853.62px;font-size:11px;line-height:15px;transform:scaleX(0.8414);transform-origin:0 50%;">PRG_Visualization</span>
<div style="left:121px;top:878px;width:9px;height:1px;background:repeating-linear-gradient(90deg,#fff 0 1px,#b4b4b4 1px 2px)"></div>
<svg style="left:130px;top:870px" width="16" height="16" viewBox="0 0 16 16"><path d="M3.500 1.500h7l3.500 3.500v9.500h-11.500v-12q0-1 1-1z" fill="#fff" stroke="#333"/><path d="M10 6.500h3M10 8.500h3M10 10.500h3" stroke="#bbb"/><rect x="4.800" y="2.800" width="3.800" height="3.800" fill="#fff" stroke="#b02828" stroke-width="1.100"/><rect x="4.800" y="6.800" width="3.800" height="3.800" fill="#fff" stroke="#2828a0" stroke-width="1.100"/><rect x=".8" y="6.400" width="3.800" height="4.200" fill="#fff" stroke="#20a020" stroke-width="1.200"/></svg>
<span style="left:150.10px;top:871.08px;font-size:11px;line-height:15px;transform:scaleX(0.8636);transform-origin:0 50%;">VisuClientManager</span>
<div style="left:84px;top:895px;width:10px;height:1px;background:repeating-linear-gradient(90deg,#fff 0 1px,#b4b4b4 1px 2px)"></div>
<svg style="left:79.5px;top:890.3px" width="9" height="9" viewBox="0 0 9 9"><rect x=".5" y=".5" width="8" height="7.500" rx="1.500" fill="#fff" stroke="#9ccacc"/><rect x="1.300" y="4.500" width="6.400" height="2.800" fill="#e6e6e6"/><path d="M2 4.200H7" stroke="#111" stroke-width="1.400"/><path d="M4.500 1.700V6.700" stroke="#111" stroke-width="1.300"/></svg>
<svg style="left:93.5px;top:887px" width="16" height="16" viewBox="0 0 16 16"><path d="M2.500 1.500h8l3.500 3.500v9.500h-12z" fill="#fff" stroke="#333"/><rect x="3.500" y="2.500" width="4" height="3.500" fill="#f0d820" stroke="#b02020" stroke-width=".9"/><path d="M.8 7.500h9.500v7.500h-9.500z" fill="#c41818" stroke="#700" stroke-width=".8"/><circle cx="5.500" cy="7.500" r="1.900" fill="#fff" stroke="#700" stroke-width=".8"/><rect x="3" y="10.500" width="5" height="3" fill="#fff"/><rect x="0" y="5.500" width="2.500" height="2.500" fill="#20a020"/></svg>
<span style="left:113.70px;top:888.54px;font-size:11px;line-height:15px;transform:scaleX(0.8701);transform-origin:0 50%;">Visualization Manager</span>
<div style="left:48px;top:913px;width:8px;height:1px;background:repeating-linear-gradient(90deg,#fff 0 1px,#b4b4b4 1px 2px)"></div>
<svg style="left:56.5px;top:904px" width="16" height="16" viewBox="0 0 16 16"><g transform="translate(0,.8)"><rect x="0" y="0" width="15" height="15" rx="2" fill="#1c4ca4"/><text x="7.500" y="7" font-family="Liberation Sans" font-size="7" font-weight="bold" fill="#fff" text-anchor="middle" textLength="12" lengthAdjust="spacingAndGlyphs">PLC</text><rect x="1.500" y="8.500" width="12" height="4.500" fill="#c0d0f0"/><path d="M4 8.500v4.500M6.500 8.500v4.500M8.500 8.500v4.500M11 8.500v4.500" stroke="#1c4ca4" stroke-width="1.200"/></g></svg>
<span style="left:76.70px;top:906.00px;font-size:11px;line-height:15px;transform:scaleX(0.8862);transform-origin:0 50%;">PLC_Manager (70.0000)</span>
<div style="left:48px;top:930px;width:8px;height:1px;background:repeating-linear-gradient(90deg,#fff 0 1px,#b4b4b4 1px 2px)"></div>
<svg style="left:56.5px;top:922px" width="16" height="16" viewBox="0 0 16 16"><g transform="translate(0,.8)"><rect x="0" y="0" width="15" height="15" rx="3" fill="#0a0a92"/><path d="M1.300 8.200q6.200-7.400 12.400 0l-1 .8q-5.200-3-10.400 0z" fill="#fff"/><path d="M3.500 8.200q4-2.500 8 0q-1 3-4 3t-4-3z" fill="#fff"/><circle cx="7.500" cy="8" r="1.900" fill="#0a0a92"/></g></svg>
<span style="left:76.70px;top:923.46px;font-size:11px;line-height:15px;transform:scaleX(0.9141);transform-origin:0 50%;">Observer (705003)</span>
<div style="left:48px;top:947px;width:8px;height:1px;background:repeating-linear-gradient(90deg,#fff 0 1px,#b4b4b4 1px 2px)"></div>
<svg style="left:42.5px;top:942.7px" width="9" height="9" viewBox="0 0 9 9"><rect x=".5" y=".5" width="8" height="7.500" rx="1.500" fill="#fff" stroke="#9ccacc"/><rect x="1.300" y="4.500" width="6.400" height="2.800" fill="#e6e6e6"/><path d="M2 4.200H7" stroke="#111" stroke-width="1.400"/><path d="M4.500 1.700V6.700" stroke="#111" stroke-width="1.300"/></svg>
<svg style="left:56.5px;top:939px" width="16" height="16" viewBox="0 0 16 16"><g transform="translate(0,.8)"><rect x="0" y="0" width="15" height="15" rx="3" fill="#0a0a92"/><rect x="2.200" y="1.800" width="3.800" height="6.200" fill="#fff"/><rect x="9" y="1.800" width="3.800" height="6.200" fill="#fff"/><path d="M4.100 8v2.500M10.900 8v2.500" stroke="#fff" stroke-width="1.400"/><path d="M.5 10.200h14M.5 12.200h14" stroke="#fff" stroke-width=".9"/></g></svg>
<span style="left:76.70px;top:940.92px;font-size:11px;line-height:15px;transform:scaleX(0.8966);transform-origin:0 50%;">Systembus (705000)</span>
<div style="left:1px;top:1043px;width:292px;height:1px;background:#fff"></div>
<div style="left:2px;top:1045px;width:290px;height:16px;background:#f0f0f0"></div>
<div style="left:19px;top:1046px;width:256px;height:14px;background:#cdcdcd"></div>
<svg style="left:7px;top:1048px" width="6" height="9"><path d="M5 1l-4 3.500 4 3.500" fill="none" stroke="#404040" stroke-width="1.600"/></svg>
<svg style="left:281px;top:1048px" width="6" height="9"><path d="M1 1l4 3.500-4 3.500" fill="none" stroke="#404040" stroke-width="1.600"/></svg>
<div style="left:1px;top:1061px;width:293px;height:1px;background:#a0a0a0"></div>
<div style="left:1px;top:1062px;width:60px;height:21px;background:#fff;border:1px solid #a0a0a0;border-top:none;border-radius:0 0 4px 4px;box-sizing:border-box"></div>
<svg style="left:4px;top:1065px" width="15" height="14"><ellipse cx="7.500" cy="3.500" rx="6" ry="2.500" fill="#ddd" stroke="#555"/><path d="M1.500 3.500v3q6 4 12 0v-3" fill="#ccc" stroke="#555"/><path d="M1 11.500h13" stroke="#444" stroke-width="2"/><rect x="5.500" y="9" width="4" height="4" fill="#e8c020" stroke="#554400"/></svg>
<span style="left:21.00px;top:1064.50px;font-size:11px;line-height:15px;transform:scaleX(0.8946);transform-origin:0 50%;">Devices</span>
<svg style="left:65px;top:1064px" width="14" height="16"><path d="M1.500 3.500h8l3 3v9h-11z" fill="#fff" stroke="#666"/><path d="M3.500 1.500h6l3 3" fill="none" stroke="#3080d0"/><path d="M9.500 1.500v3h3" fill="#a0c8f0" stroke="#3080d0"/></svg>
<span style="left:81.00px;top:1064.50px;font-size:11px;line-height:15px;transform:scaleX(0.8520);transform-origin:0 50%;color:#505050;">POUs</span>
<div style="left:3px;top:1085px;width:292px;height:19px;border:1px solid #8a8a8a;border-bottom:none;border-radius:3px 3px 0 0;box-sizing:border-box;background:#f4f4f4"></div>
<svg style="left:7px;top:1089px" width="11" height="12"><rect x=".5" y=".5" width="10" height="11" fill="#fff" stroke="#222"/><path d="M.5 1.500h10" stroke="#1030a0" stroke-width="2"/><path d="M2.500 5.500h6M2.500 7.500h6" stroke="#666"/></svg>
<span style="left:26.00px;top:1087.00px;font-size:11px;line-height:15px;transform:scaleX(0.9640);transform-origin:0 50%;color:#555;">Messages - Total 0 error(s), 1 warning(s), 11 message(s)</span>
<div style="left:297px;top:97px;width:1099px;height:987px;border:1px solid #b4b4b4;box-sizing:border-box;background:#f0f0f0"></div>
<div style="left:298px;top:116px;width:1097px;height:1px;background:#b4b4b4"></div>
<svg style="left:298px;top:99px" width="149" height="18"><path d="M0 17.500C7 17.500 15 .5 21 .5H144.500Q147.500 .5 147.500 3.500V18H0z" fill="#fff" stroke="#a8a8a8"/><path d="M1 17.500h146" stroke="#e6e6e6" stroke-width="1"/></svg>
<svg style="left:315px;top:100px" width="16" height="16" viewBox="0 0 16 16"><path d="M3.500 1.500h7l3.500 3.500v9.500h-11.500v-12q0-1 1-1z" fill="#fff" stroke="#333"/><path d="M10 6.500h3M10 8.500h3M10 10.500h3" stroke="#bbb"/><rect x="4.600" y="3" width="4" height="4" fill="#f0e020" stroke="#b02020" stroke-width=".9"/><rect x="4.600" y="7" width="4" height="4" fill="#e8306a" stroke="#3030a0" stroke-width=".9"/><rect x=".7" y="6.200" width="3.800" height="4.400" fill="#d8e820" stroke="#20a020" stroke-width="1.100"/></svg>
<span style="left:337.00px;top:100.00px;font-size:11px;line-height:15px;letter-spacing:0.011px;font-weight:bold;">ProcessImage02</span>
<svg style="left:433px;top:104px" width="8" height="8"><path d="M1 1l6 6M7 1l-6 6" stroke="#000" stroke-width="1.700"/></svg>
<div style="left:447px;top:99px;width:97px;height:17px;border:1px solid #a8a8a8;border-bottom:none;border-radius:4px 4px 0 0;box-sizing:border-box;background:#f6f6f6"></div>
<svg style="left:450px;top:100px" width="16" height="16" viewBox="0 0 16 16"><path d="M2.500 1.500h7l3 3v10h-10z" fill="#fff" stroke="#222"/><path d="M9.500 1.500v3h3" fill="none" stroke="#222"/><path d="M4.500 5.500h5.500M4.500 7.500h5.500M4.500 9.500h5.500M4.500 11.500h5.500M4.500 13h5.500" stroke="#3a3af0"/></svg>
<span style="left:474.00px;top:100.00px;font-size:11px;line-height:15px;transform:scaleX(0.8372);transform-origin:0 50%;">PLC_Main</span>
<div style="left:544px;top:99px;width:133px;height:17px;border:1px solid #a8a8a8;border-bottom:none;border-radius:4px 4px 0 0;box-sizing:border-box;background:#f6f6f6"></div>
<svg style="left:547px;top:100px" width="16" height="16" viewBox="0 0 16 16"><path d="M1.5 5l2-3h2l1 3z" fill="#20a0a0" stroke="#000" stroke-width=".8"/><rect x="1.5" y="5" width="4" height="10" fill="#20b0b0" stroke="#000" stroke-width=".8"/><rect x="5.5" y="4" width="4" height="11" fill="#e02020" stroke="#000" stroke-width=".8"/><rect x="9.5" y="5" width="3" height="10" fill="#e8e020" stroke="#000" stroke-width=".8"/><path d="M12.5 5l2-2v10l-2 2z" fill="#c0b010" stroke="#000" stroke-width=".8"/><path d="M5.5 4l2-2.500h3l-1 2.500M9.500 5l2-2h3" fill="#f0f060" stroke="#000" stroke-width=".8"/></svg>
<span style="left:575.00px;top:100.00px;font-size:11px;line-height:15px;transform:scaleX(0.8865);transform-origin:0 50%;">Library Manager</span>
<svg style="left:1382px;top:106px" width="9" height="5"><path d="M0 0h9l-4.500 5z" fill="#000"/></svg>
<div style="left:298px;top:117px;width:1097px;height:21px;background:#f0f0f0"></div>
<div style="left:298px;top:117px;width:104px;height:21px;background:#fff"></div>
<div style="left:402px;top:119px;width:128px;height:19px;border:1px solid #dcdcdc;border-bottom:none;box-sizing:border-box;background:#f3f3f3"></div>
<div style="left:530px;top:119px;width:84px;height:19px;border:1px solid #dcdcdc;border-bottom:none;box-sizing:border-box;background:#f3f3f3"></div>
<div style="left:614px;top:119px;width:116px;height:19px;border:1px solid #dcdcdc;border-bottom:none;box-sizing:border-box;background:#f3f3f3"></div>
<svg style="left:306px;top:121px" width="13" height="10" viewBox="0 0 13 10"><rect x=".5" y=".5" width="12" height="9" rx="1" fill="#fff" stroke="#222"/><path d="M2 3.500h4M7 3.500h4M2 6.500h4M7 6.500h4" stroke="#555"/></svg>
<span style="left:325.00px;top:120.50px;font-size:11px;line-height:15px;transform:scaleX(0.9250);transform-origin:0 50%;">Interface Editor</span>
<svg style="left:407px;top:123px" width="14" height="10" viewBox="0 0 14 10"><rect x=".5" y=".5" width="13" height="9" rx="1.500" fill="#e8e8e8" stroke="#222"/><path d="M2 3h10M2 5h10M2 7h10" stroke="#bbb" stroke-width=".8"/></svg>
<span style="left:426.00px;top:121.00px;font-size:11px;line-height:15px;transform:scaleX(0.9054);transform-origin:0 50%;">Hotkeys Configuration</span>
<svg style="left:537px;top:122px" width="13" height="12" viewBox="0 0 13 12"><rect x=".5" y=".5" width="12" height="11" fill="#fff" stroke="#1020a0"/><path d="M.5 1h12" stroke="#1020a0" stroke-width="2"/><rect x="1" y="3" width="4" height="2" fill="#e02020"/><rect x="1" y="5.500" width="4" height="2" fill="#e0d020"/><rect x="1" y="8" width="4" height="2" fill="#20a020"/><path d="M6 4h2.500M9.500 4h2.500M6 6.500h2.500M9.500 6.500h2.500M6 9h2.500M9.500 9h2.500" stroke="#222"/></svg>
<span style="left:556.00px;top:121.00px;font-size:11px;line-height:15px;transform:scaleX(0.8756);transform-origin:0 50%;">Element List</span>
<svg style="left:620px;top:121px" width="13" height="10" viewBox="0 0 13 10"><rect x=".5" y=".5" width="12" height="9" rx="1" fill="#fff" stroke="#222"/><path d="M2 3.500h4M7 3.500h4M2 6.500h4M7 6.500h4" stroke="#555"/></svg>
<span style="left:639.00px;top:121.00px;font-size:11px;line-height:15px;transform:scaleX(0.9098);transform-origin:0 50%;">Frame configuration</span>
<div style="left:298px;top:138px;width:1095px;height:178px;background:#fff"></div>
<div style="left:345px;top:139px;width:2px;height:174px;background:#606060"></div>
<svg style="left:303px;top:142px" width="9" height="9" viewBox="0 0 9 9"><rect x=".5" y=".5" width="8" height="8" fill="#fff" stroke="#4a90d8"/><path d="M1 4.500h7" stroke="#4a90d8"/></svg>
<span style="left:337.70px;top:139.25px;font-size:9.5px;line-height:13.5px;color:#dc4c4c;">1</span>
<span style="left:337.70px;top:155.25px;font-size:9.5px;line-height:13.5px;color:#5a9cdc;">2</span>
<span style="left:337.70px;top:171.25px;font-size:9.5px;line-height:13.5px;color:#5a9cdc;">3</span>
<span style="left:366.50px;top:139.00px;font-size:11px;line-height:15px;transform:scaleX(0.9922);transform-origin:0 50%;font-family:'Liberation Mono', monospace;color:#2020e0;-webkit-text-stroke:.25px #2020e0;">VAR_IN_OUT</span>
<span style="left:393.00px;top:155.00px;font-size:11px;line-height:15px;transform:scaleX(0.9844);transform-origin:0 50%;font-family:'Liberation Mono', monospace;color:#222;">stOem</span>
<span style="left:497.00px;top:155.00px;font-size:11px;line-height:15px;transform:scaleX(0.9594);transform-origin:0 50%;font-family:'Liberation Mono', monospace;color:#222;">: stOemType;</span>
<span style="left:366.50px;top:170.50px;font-size:11px;line-height:15px;transform:scaleX(0.9844);transform-origin:0 50%;font-family:'Liberation Mono', monospace;color:#2020e0;-webkit-text-stroke:.25px #2020e0;">END_VAR</span>
<div style="left:1329px;top:295px;width:45px;height:19px;border:1px solid #b0b0b0;box-sizing:border-box;background:#f2f2f2"></div>
<span style="left:1335.90px;top:297.50px;font-size:11px;line-height:15px;transform:scaleX(0.8973);transform-origin:50% 50%;color:#223;">100 %</span>
<div style="left:1373px;top:295px;width:19px;height:19px;border:1px solid #b0b0b0;box-sizing:border-box;background:#f6f6f6"></div>
<svg style="left:1375px;top:297px" width="16" height="16" viewBox="0 0 16 16"><rect x="1.500" y="6.500" width="7" height="8" fill="#eee" stroke="#222"/><circle cx="7.500" cy="5.500" r="4" fill="none" stroke="#111" stroke-width="1.400"/><circle cx="7" cy="5" r="1.800" fill="#20c0c0"/><path d="M10.500 8.500l4.500 4.500" stroke="#000" stroke-width="1.800"/></svg>
<div style="left:298px;top:316px;width:1097px;height:7px;background:#f0f0f0"></div>
<div style="left:298px;top:317px;width:1094px;height:1px;background:#b8b8b8"></div>
<div style="left:298px;top:322px;width:1094px;height:1px;background:#b8b8b8"></div>
<svg style="left:836px;top:317px" width="22" height="5" viewBox="0 0 22 5"><path d="M0 5l4.500-4.500 4.500 4.500z" fill="#888"/><path d="M13 0l4.500 4.500 4.500-4.500z" fill="#888"/></svg>
<div style="left:298px;top:323px;width:1082px;height:625px;background:#f0f1f1"></div>
<div style="left:298px;top:948px;width:1082px;height:119px;background:#808080"></div>
<div style="left:1380px;top:323px;width:15px;height:744px;background:#f0f0f0"></div>
<div style="left:1381px;top:339px;width:13px;height:238px;background:#cdcdcd"></div>
<svg style="left:1383px;top:328px" width="9" height="6" viewBox="0 0 9 6"><path d="M1 5l3.500-4 3.500 4" fill="none" stroke="#404040" stroke-width="1.600"/></svg>
<svg style="left:1383px;top:1055px" width="9" height="6" viewBox="0 0 9 6"><path d="M1 1l3.500 4 3.500-4" fill="none" stroke="#404040" stroke-width="1.600"/></svg>
<div style="left:298px;top:1067px;width:1097px;height:16px;background:#f0f0f0"></div>
<div style="left:315px;top:1068px;width:385px;height:14px;background:#cdcdcd"></div>
<svg style="left:303px;top:1070px" width="6" height="9" viewBox="0 0 6 9"><path d="M5 1l-4 3.500 4 3.500" fill="none" stroke="#404040" stroke-width="1.600"/></svg>
<svg style="left:1369px;top:1070px" width="6" height="9" viewBox="0 0 6 9"><path d="M1 1l4 3.500-4 3.500" fill="none" stroke="#404040" stroke-width="1.600"/></svg>
<div style="left:1320px;top:1049px;width:41px;height:18px;background:#f2f2f2;border-left:1px solid #fff;box-sizing:border-box"></div>
<span style="left:1325.82px;top:1051.50px;font-size:10px;line-height:14px;transform:scaleX(0.8815);transform-origin:50% 50%;color:#223;">100 %</span>
<div style="left:1361px;top:1049px;width:18px;height:18px;background:#f6f6f6;border-left:1px solid #c0c0c0;box-sizing:border-box"></div>
<svg style="left:1362px;top:1050px" width="16" height="16" viewBox="0 0 16 16"><rect x="1.500" y="6.500" width="7" height="8" fill="#eee" stroke="#222"/><circle cx="7.500" cy="5.500" r="4" fill="none" stroke="#111" stroke-width="1.400"/><circle cx="7" cy="5" r="1.800" fill="#20c0c0"/><path d="M10.500 8.500l4.500 4.500" stroke="#000" stroke-width="1.800"/></svg>
<span style="left:859.84px;top:341.60px;font-size:38px;line-height:44px;transform:scaleX(0.8649);transform-origin:50% 50%;font-weight:bold;">%s</span>
<svg style="left:336px;top:439px" width="7" height="7" viewBox="0 0 7 7"><rect width="7" height="7" fill="#2020f4"/><rect x="1.400" y="1.400" width="4.200" height="4.200" fill="#9090ea"/></svg>
<svg style="left:336px;top:453px" width="7" height="7" viewBox="0 0 7 7"><rect width="7" height="7" fill="#2020f4"/><rect x="1.400" y="1.400" width="4.200" height="4.200" fill="#9090ea"/></svg>
<svg style="left:336px;top:467px" width="7" height="7" viewBox="0 0 7 7"><rect width="7" height="7" fill="#2020f4"/><rect x="1.400" y="1.400" width="4.200" height="4.200" fill="#9090ea"/></svg>
<svg style="left:405px;top:439px" width="7" height="7" viewBox="0 0 7 7"><rect width="7" height="7" fill="#2020f4"/><rect x="1.400" y="1.400" width="4.200" height="4.200" fill="#9090ea"/></svg>
<svg style="left:405px;top:453px" width="7" height="7" viewBox="0 0 7 7"><rect width="7" height="7" fill="#2020f4"/><rect x="1.400" y="1.400" width="4.200" height="4.200" fill="#9090ea"/></svg>
<svg style="left:405px;top:467px" width="7" height="7" viewBox="0 0 7 7"><rect width="7" height="7" fill="#2020f4"/><rect x="1.400" y="1.400" width="4.200" height="4.200" fill="#9090ea"/></svg>
<svg style="left:474px;top:439px" width="7" height="7" viewBox="0 0 7 7"><rect width="7" height="7" fill="#2020f4"/><rect x="1.400" y="1.400" width="4.200" height="4.200" fill="#9090ea"/></svg>
<svg style="left:474px;top:453px" width="7" height="7" viewBox="0 0 7 7"><rect width="7" height="7" fill="#2020f4"/><rect x="1.400" y="1.400" width="4.200" height="4.200" fill="#9090ea"/></svg>
<svg style="left:474px;top:467px" width="7" height="7" viewBox="0 0 7 7"><rect width="7" height="7" fill="#2020f4"/><rect x="1.400" y="1.400" width="4.200" height="4.200" fill="#9090ea"/></svg>
<span style="left:395.60px;top:444.60px;font-size:17px;line-height:20px;letter-spacing:0.088px;color:#3c3c3c;">%s</span>
<svg style="left:404.1px;top:451.7px" width="9" height="9" viewBox="0 0 9 9"><circle cx="4.500" cy="4.500" r="4.200" fill="#111"/><path d="M2 4.500h5M4.500 2v5" stroke="#fff" stroke-width="1.100"/></svg>
<div style="left:589px;top:418px;width:712px;height:387px;border:2px solid #000;box-sizing:border-box;background:#f0f0f0"></div>
<div style="left:591px;top:420px;width:708px;height:38px;background:#fff"></div>
<span style="left:601.00px;top:429.60px;font-size:15.4px;line-height:20px;transform:scaleX(0.9612);transform-origin:0 50%;">Assign parameters &lt;OutputstFloatValueOneComma&gt;</span>
<div style="left:1274px;top:430px;width:24px;height:23px;background:#c75050"></div>
<svg style="left:1282px;top:438px" width="8" height="8" viewBox="0 0 8 8"><path d="M1 1l6 6M7 1l-6 6" stroke="#fff" stroke-width="1.700"/></svg>
<span style="left:608.50px;top:466.20px;font-size:13.6px;line-height:20px;letter-spacing:0.286px;">Assign the parameters for the referenced visualization &lt;OutputstFloatValueOneComma&gt;.</span>
<div style="left:606px;top:508px;width:678px;height:235px;border:1px solid #828790;box-sizing:border-box;background:#fff"></div>
<span style="left:616.00px;top:516.00px;font-size:13.6px;line-height:20px;letter-spacing:0.503px;">Parameter</span>
<span style="left:801.00px;top:516.00px;font-size:13.6px;line-height:20px;letter-spacing:0.129px;">Type</span>
<span style="left:1040.00px;top:516.00px;font-size:13.6px;line-height:20px;letter-spacing:0.447px;">Value</span>
<div style="left:792px;top:510px;width:1px;height:79px;background:#e0e0e0"></div>
<div style="left:1032px;top:510px;width:1px;height:79px;background:#e0e0e0"></div>
<div style="left:1233px;top:510px;width:1px;height:79px;background:#e0e0e0"></div>
<div style="left:633px;top:541px;width:399px;height:23px;background:#f0f0f0"></div>
<div style="left:608px;top:564px;width:627px;height:2px;background:#e9e9e9"></div>
<div style="left:608px;top:588px;width:627px;height:2px;background:#e9e9e9"></div>
<div style="left:792px;top:541px;width:1px;height:48px;background:#e0e0e0"></div>
<div style="left:621px;top:553px;width:1px;height:23px;background:repeating-linear-gradient(#fff 0 1px,#999 1px 2px)"></div>
<div style="left:621px;top:553px;width:12px;height:1px;background:repeating-linear-gradient(90deg,#fff 0 1px,#999 1px 2px)"></div>
<div style="left:621px;top:576px;width:12px;height:1px;background:repeating-linear-gradient(90deg,#fff 0 1px,#999 1px 2px)"></div>
<svg style="left:638px;top:544px" width="17" height="17" viewBox="0 0 17 17"><path d="M.5 .5l5 5" stroke="#8b0000" stroke-width="1.500"/><path d="M6.800 2.300v4.500h-4.500z" fill="#8b0000"/><path d="M5.500 7.500l5.500-5.500 5 3-5.500 5.500z" fill="#4242ff" stroke="#99a" stroke-width=".5"/><path d="M5.500 7.500l5 3v5l-5-3.500z" fill="#86b2ea"/><path d="M10.500 10.500l5.500-5.500v4.500l-5.500 6z" fill="#0a0a0a"/><path d="M12 12l2.500-2.700" stroke="#999" stroke-width=".8"/></svg>
<svg style="left:638px;top:568px" width="17" height="17" viewBox="0 0 17 17"><path d="M.5 .5l5 5" stroke="#8b0000" stroke-width="1.500"/><path d="M6.800 2.300v4.500h-4.500z" fill="#8b0000"/><path d="M5.500 7.500l5.500-5.500 5 3-5.500 5.500z" fill="#4242ff" stroke="#99a" stroke-width=".5"/><path d="M5.500 7.500l5 3v5l-5-3.500z" fill="#86b2ea"/><path d="M10.500 10.500l5.500-5.500v4.500l-5.500 6z" fill="#0a0a0a"/><path d="M12 12l2.500-2.700" stroke="#999" stroke-width=".8"/></svg>
<span style="left:664.00px;top:543.50px;font-size:13.6px;line-height:20px;transform:scaleX(0.9925);transform-origin:0 50%;">stFloatValue</span>
<span style="left:664.00px;top:567.50px;font-size:13.6px;line-height:20px;letter-spacing:0.082px;">dwTextAlignment</span>
<span style="left:799.00px;top:543.50px;font-size:13px;line-height:20px;transform:scaleX(0.9524);transform-origin:0 50%;">JCMPUTILITF.STFLOATVALUETYPE</span>
<span style="left:799.00px;top:567.50px;font-size:13px;line-height:20px;transform:scaleX(0.9694);transform-origin:0 50%;">DWORD</span>
<span style="left:1038.00px;top:540.50px;font-size:13.2px;line-height:20px;letter-spacing:0.118px;">PLC_Main.stFloatOutput</span>
<span style="left:1040.00px;top:567.50px;font-size:13.2px;line-height:20px;">5</span>
<div style="left:1205px;top:542px;width:28px;height:21px;background:#ececec;border:1.5px solid #a8a8a8;box-sizing:border-box"></div>
<span style="left:1213.58px;top:545.50px;font-size:13px;line-height:17px;font-weight:bold;">...</span>
<div style="left:1017px;top:532px;width:235px;height:62px;border:3px solid #f00;box-sizing:border-box"></div>
<div style="left:1090px;top:761px;width:92px;height:26px;background:#e1e1e1;border:2px solid #0078d7;box-sizing:border-box"></div>
<span style="left:1126.00px;top:764.30px;font-size:14px;line-height:20px;letter-spacing:0.383px;">OK</span>
<div style="left:1192px;top:761px;width:91px;height:26px;background:#e1e1e1;border:1px solid #adadad;box-sizing:border-box"></div>
<span style="left:1215.70px;top:764.30px;font-size:14px;line-height:20px;transform:scaleX(0.9405);transform-origin:50% 50%;">Cancel</span>
<svg style="left:1287px;top:792px" width="11" height="11" viewBox="0 0 11 11"><path d="M9 1v2M6 4v2M9 4v2M3 7v2M6 7v2M9 7v2" stroke="#b0b0b0" stroke-width="2"/></svg>
<div style="left:1400px;top:97px;width:1417px;height:20px;background:#99b4d1"></div>
<span style="left:1404.00px;top:100.00px;font-size:11px;line-height:15px;transform:scaleX(0.8989);transform-origin:0 50%;">Visualization Toolbox</span>
<svg style="left:1764px;top:106px" width="9" height="5"><path d="M0 0h9l-4.500 5z" fill="#000"/></svg>
<svg style="left:1784px;top:102px" width="8" height="11"><path d="M2 .5h4v5h-4zM.5 6h7M4 6v4.500" fill="none" stroke="#000" stroke-width="1.200"/><path d="M5 1v4.500" stroke="#000"/></svg>
<svg style="left:1801px;top:103px" width="9" height="9"><path d="M1 1l7 7M8 1l-7 7" stroke="#000" stroke-width="1.800"/></svg>
<div style="left:1400px;top:117px;width:417px;height:24px;background:linear-gradient(#fff,#fafafa 50%,#e8e8e8)"></div>
<svg style="left:1406px;top:121px" width="14" height="16" viewBox="0 0 14 16"><path d="M1.500 1.500h8l3 3v10h-11z" fill="#fff" stroke="#222"/><path d="M3 5h8M3 7.500h8M3 10h8M3 12.500h8M4.500 4v10M7 4v10M9.500 4v10" stroke="#999" stroke-width=".8"/><rect x="5.500" y="7" width="2.500" height="2.500" fill="#20e020"/></svg>
<div style="left:1426px;top:122px;width:1px;height:13px;background:#c8c8c8"></div>
<svg style="left:1433px;top:121px" width="14" height="16" viewBox="0 0 14 16"><path d="M1.500 1.500h8l3 3v10h-11z" fill="#fff" stroke="#222"/><path d="M3 5h8M3 7.500h8M3 10h8M3 12.500h8M4.500 4v10M7 4v10M9.500 4v10" stroke="#999" stroke-width=".8"/><rect x="3" y="5" width="2.500" height="2.500" fill="#20e020"/><rect x="7" y="5" width="2.500" height="2.500" fill="#20e020"/><rect x="5" y="8" width="4.500" height="2" fill="#20e020"/></svg>
<div style="left:1454px;top:122px;width:1px;height:13px;background:#c8c8c8"></div>
<svg style="left:1461px;top:121px" width="15" height="15" viewBox="0 0 15 15"><rect x="1.500" y="1" width="12.500" height="9.500" fill="#fff" stroke="#000"/><path d="M1 1.200h13.500" stroke="#1010a0" stroke-width="1.800"/><path d="M1 14l7-7" stroke="#601010" stroke-width="1.800"/><path d="M5 5q3-3 7 1l-2 1q-2-2-4 0z" fill="#c8b010" stroke="#333" stroke-width=".6"/></svg>
<div style="left:1400px;top:141px;width:417px;height:289px;background:#d3d3d3"></div>
<div style="left:1400px;top:141.5px;width:52.5px;height:18.5px;background:linear-gradient(#9c9c9c,#8a8a8a 50%,#767676);border:1px solid #5e5e5e;border-radius:6px;box-sizing:border-box;box-shadow:0 1px 0 #555"></div>
<span style="left:1412.32px;top:144.20px;font-size:11.4px;line-height:15px;color:#f4f4f4;text-shadow:0 1px 1px #0005;">Basic</span>
<div style="left:1454.3px;top:141.5px;width:115.7px;height:18.5px;background:linear-gradient(#9c9c9c,#8a8a8a 50%,#767676);border:1px solid #5e5e5e;border-radius:6px;box-sizing:border-box;box-shadow:0 1px 0 #555"></div>
<span style="left:1466.25px;top:144.20px;font-size:11.4px;line-height:15px;color:#f4f4f4;text-shadow:0 1px 1px #0005;">Common Controls</span>
<div style="left:1571.8px;top:141.5px;width:101.9px;height:18.5px;background:linear-gradient(#9c9c9c,#8a8a8a 50%,#767676);border:1px solid #5e5e5e;border-radius:6px;box-sizing:border-box;box-shadow:0 1px 0 #555"></div>
<span style="left:1583.81px;top:144.20px;font-size:11.4px;line-height:15px;color:#f4f4f4;text-shadow:0 1px 1px #0005;">Alarm Manager</span>
<div style="left:1676px;top:141.5px;width:140px;height:18.5px;background:linear-gradient(#9c9c9c,#8a8a8a 50%,#767676);border:1px solid #5e5e5e;border-radius:6px;box-sizing:border-box;box-shadow:0 1px 0 #555"></div>
<span style="left:1688.38px;top:144.20px;font-size:11.4px;line-height:15px;color:#f4f4f4;text-shadow:0 1px 1px #0005;">Measurement Controls</span>
<div style="left:1400px;top:161.7px;width:161.8px;height:18.5px;background:linear-gradient(#9c9c9c,#8a8a8a 50%,#767676);border:1px solid #5e5e5e;border-radius:6px;box-sizing:border-box;box-shadow:0 1px 0 #555"></div>
<span style="left:1417.28px;top:164.37px;font-size:11.4px;line-height:15px;color:#f4f4f4;text-shadow:0 1px 1px #0005;">Lamps/Switches/Bitmaps</span>
<div style="left:1563.7px;top:161.7px;width:117.0px;height:18.5px;background:linear-gradient(#9c9c9c,#8a8a8a 50%,#767676);border:1px solid #5e5e5e;border-radius:6px;box-sizing:border-box;box-shadow:0 1px 0 #555"></div>
<span style="left:1580.72px;top:164.37px;font-size:11.4px;line-height:15px;color:#f4f4f4;text-shadow:0 1px 1px #0005;">Special Controls</span>
<div style="left:1682.6px;top:161.7px;width:133.4px;height:18.5px;background:linear-gradient(#9c9c9c,#8a8a8a 50%,#767676);border:1px solid #5e5e5e;border-radius:6px;box-sizing:border-box;box-shadow:0 1px 0 #555"></div>
<span style="left:1700.45px;top:164.37px;font-size:11.4px;line-height:15px;color:#f4f4f4;text-shadow:0 1px 1px #0005;">Date/Time Controls</span>
<div style="left:1400px;top:181.8px;width:119.5px;height:18.5px;background:linear-gradient(#9c9c9c,#8a8a8a 50%,#767676);border:1px solid #5e5e5e;border-radius:6px;box-sizing:border-box;box-shadow:0 1px 0 #555"></div>
<span style="left:1416.38px;top:184.54px;font-size:11.4px;line-height:15px;color:#f4f4f4;text-shadow:0 1px 1px #0005;">ImagePool_OEM</span>
<div style="left:1521.3px;top:181.8px;width:125.0px;height:18.5px;background:linear-gradient(#9c9c9c,#8a8a8a 50%,#767676);border:1px solid #5e5e5e;border-radius:6px;box-sizing:border-box;box-shadow:0 1px 0 #555"></div>
<span style="left:1537.57px;top:184.54px;font-size:11.4px;line-height:15px;color:#f4f4f4;text-shadow:0 1px 1px #0005;">ImagePoolDialogs</span>
<div style="left:1648px;top:181.8px;width:75.5px;height:18.5px;background:linear-gradient(#9c9c9c,#8a8a8a 50%,#767676);border:1px solid #5e5e5e;border-radius:6px;box-sizing:border-box;box-shadow:0 1px 0 #555"></div>
<span style="left:1664.54px;top:184.54px;font-size:11.4px;line-height:15px;color:#f4f4f4;text-shadow:0 1px 1px #0005;">IP_VUM</span>
<div style="left:1725.4px;top:181.8px;width:90.6px;height:18.5px;background:linear-gradient(#9c9c9c,#8a8a8a 50%,#767676);border:1px solid #5e5e5e;border-radius:6px;box-sizing:border-box;box-shadow:0 1px 0 #555"></div>
<span style="left:1743.47px;top:184.54px;font-size:11.4px;line-height:15px;color:#f4f4f4;text-shadow:0 1px 1px #0005;">ImagePool</span>
<div style="left:1400px;top:202.0px;width:123px;height:18.5px;background:linear-gradient(#9c9c9c,#8a8a8a 50%,#767676);border:1px solid #5e5e5e;border-radius:6px;box-sizing:border-box;box-shadow:0 1px 0 #555"></div>
<span style="left:1407.04px;top:204.71px;font-size:11.4px;line-height:15px;color:#f4f4f4;text-shadow:0 1px 1px #0005;">SaveanimationRound</span>
<div style="left:1524.8px;top:202.0px;width:126.2px;height:18.5px;background:linear-gradient(#9c9c9c,#8a8a8a 50%,#767676);border:1px solid #5e5e5e;border-radius:6px;box-sizing:border-box;box-shadow:0 1px 0 #555"></div>
<span style="left:1531.85px;top:204.71px;font-size:11.4px;line-height:15px;color:#f4f4f4;text-shadow:0 1px 1px #0005;">SaveanimationSquare</span>
<div style="left:1652.8px;top:202.0px;width:60.9px;height:18.5px;background:linear-gradient(#9c9c9c,#8a8a8a 50%,#767676);border:1px solid #5e5e5e;border-radius:6px;box-sizing:border-box;box-shadow:0 1px 0 #555"></div>
<span style="left:1659.82px;top:204.71px;font-size:11.4px;line-height:15px;color:#f4f4f4;text-shadow:0 1px 1px #0005;">Miniature</span>
<div style="left:1715.6px;top:202.0px;width:47.7px;height:18.5px;background:linear-gradient(#9c9c9c,#8a8a8a 50%,#767676);border:1px solid #5e5e5e;border-radius:6px;box-sizing:border-box;box-shadow:0 1px 0 #555"></div>
<span style="left:1722.66px;top:204.71px;font-size:11.4px;line-height:15px;color:#f4f4f4;text-shadow:0 1px 1px #0005;">Round</span>
<div style="left:1765px;top:202.0px;width:51px;height:18.5px;background:linear-gradient(#9c9c9c,#8a8a8a 50%,#767676);border:1px solid #5e5e5e;border-radius:6px;box-sizing:border-box;box-shadow:0 1px 0 #555"></div>
<span style="left:1772.13px;top:204.71px;font-size:11.4px;line-height:15px;color:#f4f4f4;text-shadow:0 1px 1px #0005;">Square</span>
<div style="left:1400px;top:222.2px;width:94.6px;height:18.5px;background:linear-gradient(#9c9c9c,#8a8a8a 50%,#767676);border:1px solid #5e5e5e;border-radius:6px;box-sizing:border-box;box-shadow:0 1px 0 #555"></div>
<span style="left:1416.90px;top:224.88px;font-size:11.4px;line-height:15px;color:#f4f4f4;text-shadow:0 1px 1px #0005;">Background</span>
<div style="left:1496.4px;top:222.2px;width:84.6px;height:18.5px;background:linear-gradient(#9c9c9c,#8a8a8a 50%,#767676);border:1px solid #5e5e5e;border-radius:6px;box-sizing:border-box;box-shadow:0 1px 0 #555"></div>
<span style="left:1513.37px;top:224.88px;font-size:11.4px;line-height:15px;color:#f4f4f4;text-shadow:0 1px 1px #0005;">Checkbox</span>
<div style="left:1583px;top:222.2px;width:63px;height:18.5px;background:linear-gradient(#9c9c9c,#8a8a8a 50%,#767676);border:1px solid #5e5e5e;border-radius:6px;box-sizing:border-box;box-shadow:0 1px 0 #555"></div>
<span style="left:1599.94px;top:224.88px;font-size:11.4px;line-height:15px;color:#f4f4f4;text-shadow:0 1px 1px #0005;">Slider</span>
<div style="left:1648px;top:222.2px;width:168px;height:18.5px;background:linear-gradient(#9c9c9c,#8a8a8a 50%,#767676);border:1px solid #5e5e5e;border-radius:6px;box-sizing:border-box;box-shadow:0 1px 0 #555"></div>
<span style="left:1666.79px;top:224.88px;font-size:11.4px;line-height:15px;color:#f4f4f4;text-shadow:0 1px 1px #0005;">SquareNegativeDarkGrey</span>
<div style="left:1400px;top:242.4px;width:120.6px;height:18.5px;background:linear-gradient(#9c9c9c,#8a8a8a 50%,#767676);border:1px solid #5e5e5e;border-radius:6px;box-sizing:border-box;box-shadow:0 1px 0 #555"></div>
<span style="left:1407.11px;top:245.05px;font-size:11.4px;line-height:15px;color:#f4f4f4;text-shadow:0 1px 1px #0005;">SquareNegativeGrey</span>
<div style="left:1522.5px;top:242.4px;width:57.9px;height:18.5px;background:linear-gradient(#9c9c9c,#8a8a8a 50%,#767676);border:1px solid #5e5e5e;border-radius:6px;box-sizing:border-box;box-shadow:0 1px 0 #555"></div>
<span style="left:1529.61px;top:245.05px;font-size:11.4px;line-height:15px;color:#f4f4f4;text-shadow:0 1px 1px #0005;">Symbols</span>
<div style="left:1582.3px;top:242.4px;width:89.1px;height:18.5px;background:linear-gradient(#9c9c9c,#8a8a8a 50%,#767676);border:1px solid #5e5e5e;border-radius:6px;box-sizing:border-box;box-shadow:0 1px 0 #555"></div>
<span style="left:1589.18px;top:245.05px;font-size:11.4px;line-height:15px;color:#f4f4f4;text-shadow:0 1px 1px #0005;">Current project</span>
<div style="left:1673.3px;top:242.4px;width:66.0px;height:18.5px;background:linear-gradient(#9c9c9c,#8a8a8a 50%,#767676);border:1px solid #5e5e5e;border-radius:6px;box-sizing:border-box;box-shadow:0 1px 0 #555"></div>
<span style="left:1680.45px;top:245.05px;font-size:11.4px;line-height:15px;color:#f4f4f4;text-shadow:0 1px 1px #0005;">JCmpVisu</span>
<div style="left:1741.2px;top:242.4px;width:74.8px;height:18.5px;background:linear-gradient(#9c9c9c,#8a8a8a 50%,#767676);border:1px solid #5e5e5e;border-radius:6px;box-sizing:border-box;box-shadow:0 1px 0 #555"></div>
<span style="left:1748.62px;top:245.05px;font-size:11.4px;line-height:15px;color:#f4f4f4;text-shadow:0 1px 1px #0005;">VisuDialogs</span>
<div style="left:1400px;top:262.5px;width:131.8px;height:18.5px;background:linear-gradient(#9c9c9c,#8a8a8a 50%,#767676);border:1px solid #5e5e5e;border-radius:6px;box-sizing:border-box;box-shadow:0 1px 0 #555"></div>
<span style="left:1409.65px;top:265.22px;font-size:11.4px;line-height:15px;color:#f4f4f4;text-shadow:0 1px 1px #0005;">VisuUserManagement</span>
<div style="left:1533.7px;top:262.5px;width:84.0px;height:18.5px;background:linear-gradient(#9c9c9c,#8a8a8a 50%,#767676);border:1px solid #5e5e5e;border-radius:6px;box-sizing:border-box;box-shadow:0 1px 0 #555"></div>
<span style="left:1542.88px;top:265.22px;font-size:11.4px;line-height:15px;color:#f4f4f4;text-shadow:0 1px 1px #0005;">JCmpPgVisu</span>
<div style="left:1619.8px;top:262.5px;width:98.2px;height:18.5px;background:linear-gradient(#5cc65c,#36a836 55%,#2e9a2e);border:1px solid #2c8c2c;border-radius:6px;box-sizing:border-box;box-shadow:0 1px 0 #555"></div>
<span style="left:1629.12px;top:265.22px;font-size:11.4px;line-height:15px;color:#f4f4f4;text-shadow:0 1px 1px #0005;">JCmpVisuBasic</span>
<div style="left:1720px;top:262.5px;width:96px;height:18.5px;background:linear-gradient(#9c9c9c,#8a8a8a 50%,#767676);border:1px solid #5e5e5e;border-radius:6px;box-sizing:border-box;box-shadow:0 1px 0 #555"></div>
<span style="left:1729.70px;top:265.22px;font-size:11.4px;line-height:15px;color:#f4f4f4;text-shadow:0 1px 1px #0005;">JCmpVisuTime</span>
<div style="left:1400px;top:282.7px;width:416px;height:18.5px;background:linear-gradient(#9c9c9c,#8a8a8a 50%,#767676);border:1px solid #5e5e5e;border-radius:6px;box-sizing:border-box;box-shadow:0 1px 0 #555"></div>
<span style="left:1587.42px;top:285.39px;font-size:11.4px;line-height:15px;color:#f4f4f4;text-shadow:0 1px 1px #0005;">Favorite</span>
<svg style="left:1596px;top:426px" width="22" height="5" viewBox="0 0 22 5"><path d="M0 5l4.500-4.500 4.500 4.500z" fill="#999"/><path d="M13 0l4.500 4.500 4.500-4.500z" fill="#999"/></svg>
<div style="left:1400px;top:430px;width:415px;height:600px;border:1px solid #9a9ea6;border-bottom:2px solid #a4a4a4;box-sizing:border-box;background:#fff"></div>
<div style="left:1796px;top:431px;width:18px;height:597px;background:#f0f0f0"></div>
<div style="left:1798px;top:624px;width:14px;height:163px;background:#cdcdcd"></div>
<svg style="left:1801px;top:438px" width="9" height="6" viewBox="0 0 9 6"><path d="M1 5l3.500-4 3.500 4" fill="none" stroke="#404040" stroke-width="1.600"/></svg>
<svg style="left:1801px;top:1017px" width="9" height="6" viewBox="0 0 9 6"><path d="M1 1l3.500 4 3.500-4" fill="none" stroke="#404040" stroke-width="1.600"/></svg>
<svg style="left:1444px;top:432px" width="40" height="12" viewBox="0 0 40 12"><path d="M0 0h40a20 13 0 0 1-40 0z" fill="#08408c"/><path d="M3 0a17.500 9 0 0 0 34 0" fill="none" stroke="#fff" stroke-width="1"/></svg>
<span style="left:1435.00px;top:447.50px;font-size:10.5px;line-height:13px;letter-spacing:0.232px;">ButtonAbort</span>
<span style="left:1530.93px;top:447.50px;font-size:10.5px;line-height:13px;transform:scaleX(0.9804);transform-origin:50% 50%;">SelectionElementDirect</span>
<span style="left:1666.14px;top:447.50px;font-size:10.5px;line-height:13px;transform:scaleX(0.9667);transform-origin:50% 50%;">SelectionElement</span>
<div style="left:1445px;top:496px;width:36px;height:23px;border:2px solid #083070;border-top-width:1px;box-sizing:border-box;background:#f2f2f2"></div>
<div style="left:1562px;top:495px;width:39px;height:12px;border:1px solid #c0c0c8;box-sizing:border-box;background:#fff"></div>
<div style="left:1591px;top:506px;width:10px;height:2px;background:#083070"></div>
<div style="left:1565px;top:500px;width:5px;height:2px;background:#4060c0"></div>
<div style="left:1684px;top:504px;width:38px;height:8px;border:1px solid #b0b0b8;box-sizing:border-box;background:#fff"></div>
<div style="left:1686px;top:507px;width:5px;height:2px;background:#2040c0"></div>
<span style="left:1411.18px;top:532.50px;font-size:10.5px;line-height:13px;transform:scaleX(0.9845);transform-origin:50% 50%;">SelectionBoxTextArray</span>
<span style="left:1526.85px;top:520.50px;font-size:10.5px;line-height:13px;transform:scaleX(0.9889);transform-origin:50% 50%;">MultiSelectionElementDir</span>
<span style="left:1578.49px;top:532.50px;font-size:10.5px;line-height:13px;transform:scaleX(0.9275);transform-origin:50% 50%;">ect</span>
<span style="left:1655.05px;top:532.50px;font-size:10.5px;line-height:13px;transform:scaleX(0.9818);transform-origin:50% 50%;">MultiSelectionElement</span>
<div style="left:1445px;top:575px;width:36px;height:23px;border:2px solid #083070;border-top-width:1px;box-sizing:border-box;background:#f2f2f2"></div>
<div style="left:1582px;top:568px;width:7px;height:50px;background:#083070"></div>
<div style="left:1582px;top:568px;width:7px;height:13px;background:#2858b0"></div>
<svg style="left:1582px;top:569px" width="7" height="6" viewBox="0 0 7 6"><path d="M1 4.500l2.500-3 2.500 3" fill="none" stroke="#fff"/></svg>
<svg style="left:1582px;top:612px" width="7" height="6" viewBox="0 0 7 6"><path d="M1 1l2.500 3 2.500-3" fill="none" stroke="#fff"/></svg>
<div style="left:1583px;top:578px;width:5px;height:1.5px;background:#fff"></div>
<div style="left:1704px;top:568px;width:6px;height:50px;background:#083070"></div>
<div style="left:1704px;top:568px;width:6px;height:11px;background:#2858b0"></div>
<svg style="left:1703.5px;top:569px" width="7" height="6" viewBox="0 0 7 6"><path d="M1 4.500l2.500-3 2.500 3" fill="none" stroke="#fff"/></svg>
<svg style="left:1703.5px;top:612px" width="7" height="6" viewBox="0 0 7 6"><path d="M1 1l2.500 3 2.500-3" fill="none" stroke="#fff"/></svg>
<span style="left:1405.64px;top:606.50px;font-size:10.5px;line-height:13px;transform:scaleX(0.9938);transform-origin:50% 50%;">MultiSelectionBoxTextArr</span>
<span style="left:1458.45px;top:618.50px;font-size:10.5px;line-height:13px;transform:scaleX(0.9014);transform-origin:50% 50%;">ay</span>
<span style="left:1534.42px;top:618.50px;font-size:10.5px;line-height:13px;transform:scaleX(0.9789);transform-origin:50% 50%;">ScrollbarMenu_360px</span>
<span style="left:1655.92px;top:618.50px;font-size:10.5px;line-height:13px;transform:scaleX(0.9789);transform-origin:50% 50%;">ScrollbarMenu_350px</span>
<div style="left:1462px;top:654px;width:4px;height:49px;background:#083070"></div>
<div style="left:1462px;top:654px;width:4px;height:7px;background:#2858b0"></div>
<div style="left:1563px;top:657px;width:44px;height:44px;background:#08408c;border:1px solid #6080b0;box-sizing:border-box"></div>
<svg style="left:1563px;top:657px" width="44" height="44" viewBox="0 0 44 44"><path d="M6.500 35.500l15.500-26 15.500 26" fill="none" stroke="#fff" stroke-width="6.600" stroke-linecap="round" stroke-linejoin="round"/></svg>
<div style="left:1688px;top:654px;width:37px;height:37px;background:#08408c"></div>
<svg style="left:1688px;top:654px" width="37" height="37" viewBox="0 0 37 37"><path d="M5.500 6.500l13 22.500 13-22.500" fill="none" stroke="#fff" stroke-width="6" stroke-linecap="round" stroke-linejoin="round"/></svg>
<span style="left:1430.15px;top:704.00px;font-size:10.5px;line-height:13px;transform:scaleX(0.9748);transform-origin:50% 50%;">ScrollbarMenu</span>
<span style="left:1529.76px;top:704.00px;font-size:10.5px;line-height:13px;transform:scaleX(0.9867);transform-origin:50% 50%;">ButtonUpScrollbarMenu</span>
<span style="left:1650.39px;top:692.00px;font-size:10.5px;line-height:13px;transform:scaleX(0.9981);transform-origin:50% 50%;">ButtonDownScrollbarMe</span>
<span style="left:1701.16px;top:704.00px;font-size:10.5px;line-height:13px;transform:scaleX(0.9412);transform-origin:50% 50%;">nu</span>
<div style="left:1455px;top:757px;width:7px;height:2px;background:#3a3a3a;border-radius:1px;filter:blur(.3px)"></div>
<div style="left:1576px;top:757px;width:7px;height:2px;background:#3a3a3a;border-radius:1px;filter:blur(.3px)"></div>
<div style="left:1684px;top:759px;width:46px;height:9px;background:#99c9ff"></div>
<div style="left:1699px;top:762px;width:7px;height:1.5px;background:#345"></div>
<span style="left:1405.50px;top:777.50px;font-size:10.5px;line-height:13px;letter-spacing:0.048px;">OutputstFloatValueTwoC</span>
<span style="left:1449.41px;top:789.50px;font-size:10.5px;line-height:13px;transform:scaleX(0.9593);transform-origin:50% 50%;">omma</span>
<span style="left:1527.00px;top:777.50px;font-size:10.5px;line-height:13px;letter-spacing:0.020px;">OutputstFloatValueThree</span>
<span style="left:1567.12px;top:789.50px;font-size:10.5px;line-height:13px;transform:scaleX(0.9248);transform-origin:50% 50%;">Comma</span>
<div style="left:1648px;top:790px;width:118px;height:25px;background:#3399ff"></div>
<span style="left:1648.73px;top:790.00px;font-size:10.5px;line-height:13px;transform:scaleX(0.9953);transform-origin:50% 50%;color:#fff;">OutputstFloatValueOneC</span>
<span style="left:1692.41px;top:802.00px;font-size:10.5px;line-height:13px;transform:scaleX(0.9593);transform-origin:50% 50%;color:#fff;">omma</span>
<div style="left:1636px;top:734px;width:137px;height:100px;border:3px solid #f00;box-sizing:border-box"></div>
<div style="left:1455px;top:843px;width:7px;height:2px;background:#3a3a3a;border-radius:1px;filter:blur(.3px)"></div>
<div style="left:1576px;top:843px;width:7px;height:2px;background:#3a3a3a;border-radius:1px;filter:blur(.3px)"></div>
<div style="left:1698px;top:849px;width:7px;height:2px;background:#3a3a3a;border-radius:1px;filter:blur(.3px)"></div>
<span style="left:1406.02px;top:863.00px;font-size:10.5px;line-height:13px;transform:scaleX(0.9487);transform-origin:50% 50%;">OutputstFloatValueNoCo</span>
<span style="left:1452.33px;top:875.00px;font-size:10.5px;line-height:13px;transform:scaleX(0.8996);transform-origin:50% 50%;">mma</span>
<span style="left:1526.93px;top:863.00px;font-size:10.5px;line-height:13px;transform:scaleX(0.9476);transform-origin:50% 50%;">OutputstDoubleValueBas</span>
<span style="left:1582.58px;top:875.00px;font-size:10.5px;line-height:13px;letter-spacing:.3px;">e</span>
<span style="left:1657.00px;top:875.00px;font-size:10.5px;line-height:13px;letter-spacing:0.050px;">OutputstDoubleValue</span>
<div style="left:1455px;top:934px;width:7px;height:2px;background:#3a3a3a;border-radius:1px;filter:blur(.3px)"></div>
<div style="left:1576px;top:934px;width:7px;height:2px;background:#3a3a3a;border-radius:1px;filter:blur(.3px)"></div>
<div style="left:1698px;top:934px;width:7px;height:2px;background:#3a3a3a;border-radius:1px;filter:blur(.3px)"></div>
<span style="left:1421.00px;top:960.50px;font-size:10.5px;line-height:13px;letter-spacing:0.092px;">OutputstDintValue</span>
<span style="left:1545.90px;top:960.50px;font-size:10.5px;line-height:13px;transform:scaleX(0.9848);transform-origin:50% 50%;">OutputRealValue</span>
<span style="left:1664.48px;top:960.50px;font-size:10.5px;line-height:13px;transform:scaleX(0.9761);transform-origin:50% 50%;">OutputLRealValue</span>
<div style="left:1445px;top:1009px;width:36px;height:19px;border:1px solid #3060b0;border-top:2px solid #083070;border-bottom:none;box-sizing:border-box;background:#f4f6fa"></div>
<svg style="left:1456px;top:1014px" width="14" height="13" viewBox="0 0 14 13"><path d="M1 2h7v11h-7zM1 5h7M1 8h7M1 11h7M3.500 2v11M6 2v11" fill="none" stroke="#111" stroke-width="1"/><rect x="8.500" y="4" width="5" height="6" fill="#2858b0"/></svg>
<div style="left:1567px;top:1009px;width:36px;height:19px;border:1px solid #3060b0;border-top:2px solid #083070;border-bottom:none;box-sizing:border-box;background:#f4f6fa"></div>
<svg style="left:1578px;top:1014px" width="14" height="13" viewBox="0 0 14 13"><path d="M1 2h7v11h-7zM1 5h7M1 8h7M1 11h7M3.500 2v11M6 2v11" fill="none" stroke="#111" stroke-width="1"/><rect x="8.500" y="4" width="5" height="6" fill="#2858b0"/></svg>
<div style="left:1683px;top:1007px;width:43px;height:21px;border:1px solid #3060b0;border-top:2px solid #083070;border-bottom:none;box-sizing:border-box;background:#f4f6fa"></div>
<svg style="left:1698px;top:1014px" width="14" height="13" viewBox="0 0 14 13"><path d="M1 2h7v11h-7zM1 5h7M1 8h7M1 11h7M3.500 2v11M6 2v11" fill="none" stroke="#111" stroke-width="1"/><rect x="8.500" y="4" width="5" height="6" fill="#2858b0"/></svg>
<div style="left:1400px;top:1029px;width:417px;height:34px;background:#f0f0f0"></div>
<div style="left:1410px;top:1044px;width:82px;height:4px;background:#e7eaea;border:1px solid #d6d6d6;box-sizing:border-box"></div>
<svg style="left:1423px;top:1038px" width="11" height="18" viewBox="0 0 11 18"><path d="M0 0h11v13l-5.500 5-5.500-5z" fill="#0078d7"/></svg>
<div style="left:1499px;top:1037px;width:17px;height:17px;background:#a0a0a0"></div>
<svg style="left:1501px;top:1039px" width="13" height="13" viewBox="0 0 13 13"><circle cx="5.500" cy="5.500" r="3.500" fill="none" stroke="#fff" stroke-width="1.300"/><path d="M8 8l4 4" stroke="#fff" stroke-width="1.600"/></svg>
<div style="left:1516px;top:1036px;width:233px;height:19px;border:1px solid #7a7a7a;box-sizing:border-box;background:#fff"></div>
<span style="left:1772.42px;top:1036.50px;font-size:11px;line-height:15px;transform:scaleX(0.9139);transform-origin:100% 50%;">72 items</span>
<div style="left:1400px;top:1063px;width:417px;height:1px;background:#a0a0a0"></div>
<svg style="left:1402px;top:1066px" width="16" height="15" viewBox="0 0 16 15"><path d="M1.500 5.500l6-4 4 3v9.500h-10z" fill="#e8e8e8" stroke="#333"/><path d="M3 8h7M3 10.500h7M6 8v5" stroke="#333"/><path d="M12 1v5" stroke="#1020a0" stroke-width="2"/><path d="M3 14.500h10.500v-8" stroke="#888" fill="none"/></svg>
<span style="left:1420.00px;top:1065.80px;font-size:11px;line-height:15px;transform:scaleX(0.9174);transform-origin:0 50%;color:#666;">Properties</span>
<div style="left:1471px;top:1063px;width:117px;height:20px;border:1px solid #a0a0a0;border-top:1px solid #fff;border-radius:0 0 3px 3px;box-sizing:border-box;background:#fff"></div>
<svg style="left:1472px;top:1065px" width="16" height="16" viewBox="0 0 16 16"><path d="M3.500 1.500h7l3.500 3.500v9.500h-11.500v-12q0-1 1-1z" fill="#fff" stroke="#333"/><path d="M10 6.500h3M10 8.500h3M10 10.500h3" stroke="#bbb"/><rect x="4.600" y="3" width="4" height="4" fill="#f0e020" stroke="#b02020" stroke-width=".9"/><rect x="4.600" y="7" width="4" height="4" fill="#e8306a" stroke="#3030a0" stroke-width=".9"/><rect x=".7" y="6.200" width="3.800" height="4.400" fill="#d8e820" stroke="#20a020" stroke-width="1.100"/></svg>
<span style="left:1491.00px;top:1065.80px;font-size:11px;line-height:15px;transform:scaleX(0.8989);transform-origin:0 50%;">Visualization Toolbox</span>
</body></html>
